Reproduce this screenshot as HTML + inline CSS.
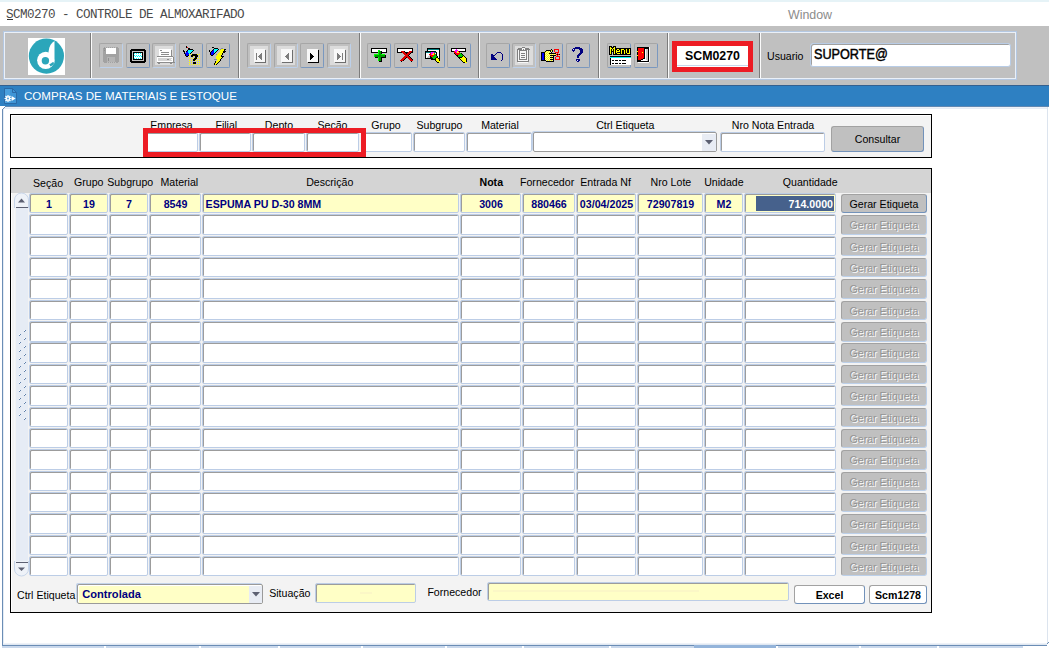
<!DOCTYPE html>
<html><head><meta charset="utf-8"><title>SCM0270</title>
<style>
html,body{margin:0;padding:0;}
body{width:1049px;height:648px;overflow:hidden;position:relative;background:#fff;font-family:"Liberation Sans",sans-serif;}
div,svg{position:absolute;}
.t{white-space:nowrap;line-height:1;}
</style></head><body>
<div style="left:0px;top:0px;width:1049px;height:2px;background:#e6f3f7"></div>
<div class="t" style="left:6px;top:8.94px;font-size:12.6px;color:#4a4a4a;text-align:left;font-family:'Liberation Mono', monospace;letter-spacing:-0.56px;">SCM0270 - CONTROLE DE ALMOXARIFADO</div>
<div style="left:7px;top:19px;width:6px;height:1px;background:#333"></div>
<div class="t" style="left:788px;top:8.50px;font-size:12.4px;color:#8c8c8c;text-align:left;font-family:'Liberation Sans', sans-serif;">Window</div>
<div style="left:0px;top:26px;width:1049px;height:59px;background:#c0c0c0"></div>
<div style="left:3px;top:31px;width:1014px;height:49px;border:1px solid #b4c8e2;box-sizing:border-box"></div>
<div style="left:4px;top:32px;width:1012px;height:47px;border:1px solid #eaf0f8;box-sizing:border-box"></div>
<div style="left:90px;top:33px;width:1px;height:45px;background:#7c7c7c"></div>
<div style="left:91px;top:33px;width:1px;height:45px;background:#fbfbfb"></div>
<div style="left:238px;top:33px;width:1px;height:45px;background:#7c7c7c"></div>
<div style="left:239px;top:33px;width:1px;height:45px;background:#fbfbfb"></div>
<div style="left:359px;top:33px;width:1px;height:45px;background:#7c7c7c"></div>
<div style="left:360px;top:33px;width:1px;height:45px;background:#fbfbfb"></div>
<div style="left:478px;top:33px;width:1px;height:45px;background:#7c7c7c"></div>
<div style="left:479px;top:33px;width:1px;height:45px;background:#fbfbfb"></div>
<div style="left:598px;top:33px;width:1px;height:45px;background:#7c7c7c"></div>
<div style="left:599px;top:33px;width:1px;height:45px;background:#fbfbfb"></div>
<div style="left:667px;top:33px;width:1px;height:45px;background:#7c7c7c"></div>
<div style="left:668px;top:33px;width:1px;height:45px;background:#fbfbfb"></div>
<div style="left:759px;top:33px;width:1px;height:45px;background:#7c7c7c"></div>
<div style="left:760px;top:33px;width:1px;height:45px;background:#fbfbfb"></div>
<svg style="position:absolute;left:28px;top:38px" width="37" height="37" viewBox="0 0 37 37">
<rect width="37" height="37" fill="#fff"/>
<circle cx="18.4" cy="18.1" r="17.6" fill="#2ba6ba"/>
<circle cx="17.7" cy="22.3" r="8.6" fill="#fff"/>
<path d="M20.6 13.5 C21 8.5 23.2 5.2 26.5 3.1 L26.5 25.2 L20.6 25.2 Z" fill="#fff"/>
<circle cx="17.4" cy="22.8" r="3.7" fill="#2ba6ba"/>
<path d="M21.2 26.2 Q23.2 25.6 24.4 24.2 L26.5 24.6 Q25.2 27.6 22.6 28.4 Z" fill="#2ba6ba"/>
</svg>
<div style="left:99px;top:43px;width:24px;height:25px;box-sizing:border-box;border:1px solid #a6a6a6;border-right-color:#bcd0ea;border-bottom-color:#bcd0ea;border-radius:2px;background:#c0c0c0"></div>
<svg style="position:absolute;left:103px;top:47px;" width="16" height="16" shape-rendering="crispEdges"><path fill="#a2a2a2" d="M1 0h1v1h-1zM3 0h1v1h-1zM5 0h1v1h-1zM7 0h1v1h-1zM9 0h1v1h-1zM11 0h1v1h-1zM13 0h2v1h-2zM0 1h1v1h-1zM2 1h1v1h-1zM13 1h3v1h-3zM0 2h3v1h-3zM13 2h3v1h-3zM0 3h1v1h-1zM2 3h1v1h-1zM13 3h3v1h-3zM0 4h3v1h-3zM13 4h3v1h-3zM0 5h3v1h-3zM13 5h3v1h-3zM0 6h3v1h-3zM13 6h3v1h-3zM0 7h16v1h-16zM0 8h16v1h-16zM0 9h16v1h-16zM0 10h4v1h-4zM12 10h4v1h-4zM0 11h4v1h-4zM12 11h4v1h-4zM0 12h4v1h-4zM12 12h4v1h-4zM0 13h4v1h-4zM12 13h4v1h-4zM0 14h4v1h-4zM12 14h4v1h-4zM1 15h3v1h-3zM5 15h1v1h-1zM7 15h1v1h-1zM9 15h1v1h-1zM11 15h1v1h-1zM13 15h2v1h-2z"/><path fill="#909090" d="M1 1h1v1h-1zM1 3h1v1h-1zM5 11h1v1h-1zM5 12h1v1h-1zM5 13h1v1h-1z"/><path fill="#ffffff" d="M3 1h10v1h-10zM3 2h10v1h-10zM3 3h10v1h-10zM3 4h10v1h-10zM3 5h10v1h-10zM3 6h10v1h-10z"/><path fill="#b4b4b4" d="M4 10h8v1h-8zM4 11h1v1h-1zM6 11h6v1h-6zM4 12h1v1h-1zM6 12h6v1h-6zM4 13h1v1h-1zM6 13h6v1h-6zM4 14h8v1h-8z"/></svg>
<div style="left:126px;top:43px;width:24px;height:25px;box-sizing:border-box;border:1px solid #a6a6a6;border-right-color:#7a98bf;border-bottom-color:#7a98bf;border-radius:2px;background:#c0c0c0"></div>
<svg style="position:absolute;left:130px;top:49px;" width="16" height="14" shape-rendering="crispEdges"><path fill="#000" d="M1 0h14v1h-14zM0 1h16v1h-16zM0 2h2v1h-2zM14 2h2v1h-2zM0 3h2v1h-2zM3 3h10v1h-10zM14 3h2v1h-2zM0 4h2v1h-2zM3 4h1v1h-1zM12 4h1v1h-1zM14 4h2v1h-2zM0 5h2v1h-2zM3 5h1v1h-1zM12 5h1v1h-1zM14 5h2v1h-2zM0 6h2v1h-2zM3 6h1v1h-1zM12 6h1v1h-1zM14 6h2v1h-2zM0 7h2v1h-2zM3 7h1v1h-1zM12 7h1v1h-1zM14 7h2v1h-2zM0 8h2v1h-2zM3 8h1v1h-1zM12 8h1v1h-1zM14 8h2v1h-2zM0 9h2v1h-2zM3 9h1v1h-1zM12 9h1v1h-1zM14 9h2v1h-2zM0 10h2v1h-2zM3 10h10v1h-10zM14 10h2v1h-2zM0 11h2v1h-2zM14 11h2v1h-2zM0 12h16v1h-16zM1 13h14v1h-14z"/><path fill="#c0c0c0" d="M2 2h12v1h-12zM2 3h1v1h-1zM13 3h1v1h-1zM2 4h1v1h-1zM13 4h1v1h-1zM2 5h1v1h-1zM13 5h1v1h-1zM2 6h1v1h-1zM13 6h1v1h-1zM2 7h1v1h-1zM13 7h1v1h-1zM2 8h1v1h-1zM13 8h1v1h-1zM2 9h1v1h-1zM13 9h1v1h-1zM2 10h1v1h-1zM13 10h1v1h-1zM2 11h12v1h-12z"/><path fill="#00ffff" d="M4 4h1v1h-1zM6 4h1v1h-1zM8 4h1v1h-1zM10 4h1v1h-1zM4 6h1v1h-1zM6 6h1v1h-1zM8 6h1v1h-1zM10 6h1v1h-1zM5 7h1v1h-1zM7 7h1v1h-1zM9 7h1v1h-1zM11 7h1v1h-1zM4 9h1v1h-1zM6 9h1v1h-1zM8 9h1v1h-1zM10 9h1v1h-1z"/><path fill="#ffffff" d="M5 4h1v1h-1zM7 4h1v1h-1zM9 4h1v1h-1zM11 4h1v1h-1zM4 5h8v1h-8zM5 6h1v1h-1zM7 6h1v1h-1zM9 6h1v1h-1zM11 6h1v1h-1zM4 7h1v1h-1zM6 7h1v1h-1zM8 7h1v1h-1zM10 7h1v1h-1zM4 8h8v1h-8zM5 9h1v1h-1zM7 9h1v1h-1zM9 9h1v1h-1zM11 9h1v1h-1z"/></svg>
<div style="left:152px;top:43px;width:24px;height:25px;box-sizing:border-box;border:1px solid #a6a6a6;border-right-color:#bcd0ea;border-bottom-color:#bcd0ea;border-radius:2px;background:#c0c0c0"></div>
<div style="left:155px;top:46px;width:18px;height:19px;background:#dcdcdc"></div>
<svg style="position:absolute;left:155px;top:46px;" width="20" height="19" shape-rendering="crispEdges"><path fill="#ffffff" d="M4 3h12v1h-12zM4 4h1v1h-1zM7 4h9v1h-9zM4 5h12v1h-12zM4 6h2v1h-2zM14 6h2v1h-2zM4 7h12v1h-12zM4 8h2v1h-2zM14 8h2v1h-2zM4 9h12v1h-12zM2 11h16v1h-16zM2 12h1v1h-1zM17 12h1v1h-1zM2 13h1v1h-1zM16 13h2v1h-2zM2 14h1v1h-1zM17 14h1v1h-1zM2 15h16v1h-16z"/><path fill="#8c8c8c" d="M5 4h2v1h-2zM16 4h1v1h-1zM16 5h1v1h-1zM6 6h8v1h-8zM16 6h1v1h-1zM16 7h1v1h-1zM6 8h8v1h-8zM16 8h1v1h-1zM16 9h1v1h-1zM2 10h16v1h-16zM18 11h1v1h-1zM18 12h1v1h-1zM12 13h2v1h-2zM18 13h1v1h-1zM18 14h1v1h-1zM18 15h1v1h-1zM2 16h18v1h-18zM3 17h2v1h-2zM15 17h2v1h-2z"/><path fill="#d4d4d4" d="M3 12h14v1h-14zM3 13h9v1h-9zM14 13h2v1h-2zM3 14h14v1h-14z"/></svg>
<div style="left:179px;top:43px;width:24px;height:25px;box-sizing:border-box;border:1px solid #a6a6a6;border-right-color:#7a98bf;border-bottom-color:#7a98bf;border-radius:2px;background:#c0c0c0"></div>
<svg style="position:absolute;left:180px;top:44px;" width="24" height="22" shape-rendering="crispEdges"><path fill="#000" d="M6 2h1v1h-1zM6 3h1v1h-1zM8 4h2v1h-2zM8 5h5v1h-5zM3 6h1v1h-1zM7 6h1v1h-1zM13 6h1v1h-1zM3 7h2v1h-2zM6 7h1v1h-1zM12 7h1v1h-1zM4 8h1v1h-1zM11 8h1v1h-1zM4 9h1v1h-1zM10 9h1v1h-1zM5 10h1v1h-1zM12 10h5v1h-5zM5 11h1v1h-1zM8 11h1v1h-1zM11 11h7v1h-7zM6 12h2v1h-2zM11 12h2v1h-2zM15 12h3v1h-3zM15 13h2v1h-2zM14 14h3v1h-3zM13 15h3v1h-3zM13 16h2v1h-2zM13 18h3v1h-3zM13 19h3v1h-3z"/><path fill="#ff0000" d="M7 3h1v1h-1z"/><path fill="#00ffff" d="M8 6h5v1h-5zM8 7h4v1h-4zM8 8h3v1h-3zM9 9h1v1h-1z"/><path fill="#0000ff" d="M7 7h1v1h-1zM6 8h2v1h-2zM5 9h4v1h-4zM6 10h3v1h-3zM6 11h2v1h-2z"/><path fill="#ffff00" d="M9 10h1v1h-1zM11 10h1v1h-1zM17 10h1v1h-1zM19 10h1v1h-1zM9 12h1v1h-1zM13 12h1v1h-1zM19 12h1v1h-1zM9 14h1v1h-1zM11 14h1v1h-1zM13 14h1v1h-1zM17 14h1v1h-1zM19 14h1v1h-1zM9 16h1v1h-1zM11 16h1v1h-1zM15 16h1v1h-1zM17 16h1v1h-1zM19 16h1v1h-1zM9 18h1v1h-1zM11 18h1v1h-1zM17 18h1v1h-1zM19 18h1v1h-1zM9 20h1v1h-1zM11 20h1v1h-1zM13 20h1v1h-1zM15 20h1v1h-1zM17 20h1v1h-1zM19 20h1v1h-1z"/></svg>
<div style="left:206px;top:43px;width:24px;height:25px;box-sizing:border-box;border:1px solid #a6a6a6;border-right-color:#7a98bf;border-bottom-color:#7a98bf;border-radius:2px;background:#c0c0c0"></div>
<svg style="position:absolute;left:207px;top:44px;" width="22" height="22" shape-rendering="crispEdges"><path fill="#000" d="M5 3h2v1h-2zM7 4h4v1h-4zM6 5h1v1h-1zM11 5h1v1h-1zM17 5h2v1h-2zM2 6h1v1h-1zM5 6h1v1h-1zM10 6h1v1h-1zM17 6h1v1h-1zM2 7h1v1h-1zM4 7h1v1h-1zM9 7h1v1h-1zM16 7h3v1h-3zM3 8h1v1h-1zM8 8h1v1h-1zM16 8h2v1h-2zM3 9h1v1h-1zM7 9h1v1h-1zM15 9h1v1h-1zM3 10h1v1h-1zM6 10h1v1h-1zM15 10h1v1h-1zM4 11h2v1h-2zM14 11h1v1h-1zM14 12h3v1h-3zM15 13h1v1h-1zM14 14h1v1h-1zM13 15h1v1h-1zM13 16h1v1h-1zM8 17h1v1h-1zM12 17h1v1h-1zM8 18h1v1h-1zM11 18h1v1h-1zM7 19h1v1h-1zM10 19h1v1h-1zM7 20h1v1h-1zM9 20h1v1h-1z"/><path fill="#8888a0" d="M14 4h2v1h-2zM13 5h1v1h-1zM9 10h1v1h-1zM7 15h3v1h-3z"/><path fill="#00ffff" d="M7 5h4v1h-4zM7 6h3v1h-3zM7 7h2v1h-2zM7 8h1v1h-1z"/><path fill="#ffff00" d="M14 5h3v1h-3zM13 6h4v1h-4zM13 7h3v1h-3zM12 8h4v1h-4zM11 9h4v1h-4zM10 10h5v1h-5zM10 11h4v1h-4zM9 12h5v1h-5zM9 13h6v1h-6zM9 14h5v1h-5zM10 15h3v1h-3zM10 16h3v1h-3zM9 17h3v1h-3zM9 18h2v1h-2zM8 19h2v1h-2zM8 20h1v1h-1z"/><path fill="#0000ff" d="M6 6h1v1h-1zM5 7h2v1h-2zM4 8h3v1h-3zM4 9h3v1h-3zM4 10h2v1h-2z"/></svg>
<div style="left:247px;top:43px;width:24px;height:25px;box-sizing:border-box;border:1px solid #a6a6a6;border-right-color:#bcd0ea;border-bottom-color:#bcd0ea;border-radius:2px;background:#c0c0c0"></div>
<div style="left:250px;top:46px;width:18px;height:19px;background:#dcdcdc"></div>
<svg style="position:absolute;left:254px;top:49px;" width="12" height="14" shape-rendering="crispEdges"><path fill="#f8f8f8" d="M0 0h11v1h-11zM0 1h11v1h-11zM0 2h11v1h-11zM0 3h11v1h-11zM0 4h2v1h-2zM3 4h4v1h-4zM8 4h3v1h-3zM0 5h2v1h-2zM3 5h3v1h-3zM8 5h3v1h-3zM0 6h2v1h-2zM3 6h2v1h-2zM8 6h3v1h-3zM0 7h2v1h-2zM3 7h1v1h-1zM8 7h3v1h-3zM0 8h2v1h-2zM3 8h2v1h-2zM8 8h3v1h-3zM0 9h2v1h-2zM3 9h3v1h-3zM8 9h3v1h-3zM0 10h2v1h-2zM3 10h4v1h-4zM8 10h3v1h-3zM0 11h11v1h-11zM0 12h11v1h-11z"/><path fill="#6e6e6e" d="M11 1h1v1h-1zM11 2h1v1h-1zM11 3h1v1h-1zM11 4h1v1h-1zM11 5h1v1h-1zM11 6h1v1h-1zM11 7h1v1h-1zM11 8h1v1h-1zM11 9h1v1h-1zM11 10h1v1h-1zM11 11h1v1h-1zM11 12h1v1h-1zM1 13h11v1h-11z"/><path fill="#7c7c7c" d="M2 4h1v1h-1zM7 4h1v1h-1zM2 5h1v1h-1zM6 5h2v1h-2zM2 6h1v1h-1zM5 6h3v1h-3zM2 7h1v1h-1zM4 7h4v1h-4zM2 8h1v1h-1zM5 8h3v1h-3zM2 9h1v1h-1zM6 9h2v1h-2zM2 10h1v1h-1zM7 10h1v1h-1z"/></svg>
<div style="left:274px;top:43px;width:24px;height:25px;box-sizing:border-box;border:1px solid #a6a6a6;border-right-color:#bcd0ea;border-bottom-color:#bcd0ea;border-radius:2px;background:#c0c0c0"></div>
<div style="left:277px;top:46px;width:18px;height:19px;background:#dcdcdc"></div>
<svg style="position:absolute;left:281px;top:49px;" width="12" height="14" shape-rendering="crispEdges"><path fill="#f8f8f8" d="M0 0h11v1h-11zM0 1h11v1h-11zM0 2h11v1h-11zM0 3h11v1h-11zM0 4h7v1h-7zM8 4h3v1h-3zM0 5h6v1h-6zM8 5h3v1h-3zM0 6h5v1h-5zM8 6h3v1h-3zM0 7h4v1h-4zM8 7h3v1h-3zM0 8h5v1h-5zM8 8h3v1h-3zM0 9h6v1h-6zM8 9h3v1h-3zM0 10h7v1h-7zM8 10h3v1h-3zM0 11h11v1h-11zM0 12h11v1h-11z"/><path fill="#6e6e6e" d="M11 1h1v1h-1zM11 2h1v1h-1zM11 3h1v1h-1zM11 4h1v1h-1zM11 5h1v1h-1zM11 6h1v1h-1zM11 7h1v1h-1zM11 8h1v1h-1zM11 9h1v1h-1zM11 10h1v1h-1zM11 11h1v1h-1zM11 12h1v1h-1zM1 13h11v1h-11z"/><path fill="#7c7c7c" d="M7 4h1v1h-1zM6 5h2v1h-2zM5 6h3v1h-3zM4 7h4v1h-4zM5 8h3v1h-3zM6 9h2v1h-2zM7 10h1v1h-1z"/></svg>
<div style="left:300px;top:43px;width:24px;height:25px;box-sizing:border-box;border:1px solid #a6a6a6;border-right-color:#7a98bf;border-bottom-color:#7a98bf;border-radius:2px;background:#c0c0c0"></div>
<svg style="position:absolute;left:307px;top:49px;" width="12" height="14" shape-rendering="crispEdges"><path fill="#f8f8f8" d="M0 0h11v1h-11zM0 1h11v1h-11zM0 2h11v1h-11zM0 3h11v1h-11zM0 4h3v1h-3zM4 4h7v1h-7zM0 5h3v1h-3zM5 5h6v1h-6zM0 6h3v1h-3zM6 6h5v1h-5zM0 7h3v1h-3zM7 7h4v1h-4zM0 8h3v1h-3zM6 8h5v1h-5zM0 9h3v1h-3zM5 9h6v1h-6zM0 10h3v1h-3zM4 10h7v1h-7zM0 11h11v1h-11zM0 12h11v1h-11z"/><path fill="#000" d="M11 1h1v1h-1zM11 2h1v1h-1zM11 3h1v1h-1zM3 4h1v1h-1zM11 4h1v1h-1zM3 5h2v1h-2zM11 5h1v1h-1zM3 6h3v1h-3zM11 6h1v1h-1zM3 7h4v1h-4zM11 7h1v1h-1zM3 8h3v1h-3zM11 8h1v1h-1zM3 9h2v1h-2zM11 9h1v1h-1zM3 10h1v1h-1zM11 10h1v1h-1zM11 11h1v1h-1zM11 12h1v1h-1zM1 13h11v1h-11z"/></svg>
<div style="left:327px;top:43px;width:24px;height:25px;box-sizing:border-box;border:1px solid #a6a6a6;border-right-color:#bcd0ea;border-bottom-color:#bcd0ea;border-radius:2px;background:#c0c0c0"></div>
<div style="left:330px;top:46px;width:18px;height:19px;background:#dcdcdc"></div>
<svg style="position:absolute;left:334px;top:49px;" width="12" height="14" shape-rendering="crispEdges"><path fill="#f8f8f8" d="M0 0h11v1h-11zM0 1h11v1h-11zM0 2h11v1h-11zM0 3h11v1h-11zM0 4h3v1h-3zM4 4h4v1h-4zM9 4h2v1h-2zM0 5h3v1h-3zM5 5h3v1h-3zM9 5h2v1h-2zM0 6h3v1h-3zM6 6h2v1h-2zM9 6h2v1h-2zM0 7h3v1h-3zM7 7h1v1h-1zM9 7h2v1h-2zM0 8h3v1h-3zM6 8h2v1h-2zM9 8h2v1h-2zM0 9h3v1h-3zM5 9h3v1h-3zM9 9h2v1h-2zM0 10h3v1h-3zM4 10h4v1h-4zM9 10h2v1h-2zM0 11h11v1h-11zM0 12h11v1h-11z"/><path fill="#6e6e6e" d="M11 1h1v1h-1zM11 2h1v1h-1zM11 3h1v1h-1zM11 4h1v1h-1zM11 5h1v1h-1zM11 6h1v1h-1zM11 7h1v1h-1zM11 8h1v1h-1zM11 9h1v1h-1zM11 10h1v1h-1zM11 11h1v1h-1zM11 12h1v1h-1zM1 13h11v1h-11z"/><path fill="#7c7c7c" d="M3 4h1v1h-1zM8 4h1v1h-1zM3 5h2v1h-2zM8 5h1v1h-1zM3 6h3v1h-3zM8 6h1v1h-1zM3 7h4v1h-4zM8 7h1v1h-1zM3 8h3v1h-3zM8 8h1v1h-1zM3 9h2v1h-2zM8 9h1v1h-1zM3 10h1v1h-1zM8 10h1v1h-1z"/></svg>
<div style="left:367px;top:43px;width:24px;height:25px;box-sizing:border-box;border:1px solid #a6a6a6;border-right-color:#7a98bf;border-bottom-color:#7a98bf;border-radius:2px;background:#c0c0c0"></div>
<svg style="position:absolute;left:371px;top:48px;" width="16" height="14" shape-rendering="crispEdges"><path fill="#000" d="M0 0h16v1h-16zM0 1h1v1h-1zM15 1h1v1h-1zM0 2h1v1h-1zM15 2h1v1h-1zM0 3h1v1h-1zM10 3h1v1h-1zM15 3h1v1h-1zM0 4h7v1h-7zM10 4h6v1h-6zM10 5h1v1h-1zM14 7h1v1h-1zM14 8h1v1h-1zM4 9h3v1h-3zM10 9h5v1h-5zM10 10h1v1h-1zM10 11h1v1h-1zM10 12h1v1h-1zM8 13h3v1h-3z"/><path fill="#fff" d="M1 1h14v1h-14zM1 2h6v1h-6zM9 2h6v1h-6zM1 3h6v1h-6zM11 3h4v1h-4z"/><path fill="#00ff00" d="M7 2h2v1h-2zM7 3h1v1h-1zM7 4h1v1h-1zM7 5h1v1h-1zM3 6h5v1h-5zM10 6h4v1h-4zM3 7h1v1h-1zM3 8h1v1h-1zM7 9h1v1h-1zM7 10h1v1h-1zM7 11h1v1h-1zM7 12h1v1h-1z"/><path fill="#009a00" d="M8 3h2v1h-2zM8 4h2v1h-2zM8 5h2v1h-2zM8 6h2v1h-2zM4 7h10v1h-10zM4 8h10v1h-10zM8 9h2v1h-2zM8 10h2v1h-2zM8 11h2v1h-2zM8 12h2v1h-2z"/></svg>
<div style="left:394px;top:43px;width:24px;height:25px;box-sizing:border-box;border:1px solid #a6a6a6;border-right-color:#7a98bf;border-bottom-color:#7a98bf;border-radius:2px;background:#c0c0c0"></div>
<svg style="position:absolute;left:397px;top:48px;" width="16" height="15" shape-rendering="crispEdges"><path fill="#000" d="M0 0h16v1h-16zM0 1h1v1h-1zM15 1h1v1h-1zM0 2h1v1h-1zM15 2h1v1h-1zM0 3h1v1h-1zM7 3h1v1h-1zM15 3h1v1h-1zM0 4h5v1h-5zM8 4h3v1h-3zM14 4h2v1h-2zM9 5h1v1h-1zM13 5h1v1h-1zM12 6h1v1h-1zM11 7h1v1h-1zM12 8h1v1h-1zM9 9h1v1h-1zM13 9h1v1h-1zM8 10h1v1h-1zM14 10h1v1h-1zM7 11h1v1h-1zM15 11h1v1h-1zM6 12h1v1h-1zM4 13h1v1h-1zM14 13h1v1h-1z"/><path fill="#fff" d="M1 1h14v1h-14zM1 2h14v1h-14zM1 3h3v1h-3zM8 3h4v1h-4z"/><path fill="#dd0000" d="M4 3h3v1h-3zM12 3h3v1h-3zM5 4h3v1h-3zM11 4h3v1h-3zM6 5h3v1h-3zM10 5h3v1h-3zM7 6h5v1h-5zM8 7h3v1h-3zM7 8h5v1h-5zM6 9h3v1h-3zM10 9h3v1h-3zM5 10h3v1h-3zM11 10h3v1h-3zM4 11h3v1h-3zM12 11h3v1h-3zM3 12h3v1h-3zM13 12h3v1h-3z"/></svg>
<div style="left:421px;top:43px;width:24px;height:25px;box-sizing:border-box;border:1px solid #a6a6a6;border-right-color:#7a98bf;border-bottom-color:#7a98bf;border-radius:2px;background:#c0c0c0"></div>
<svg style="position:absolute;left:425px;top:47px;" width="16" height="16" shape-rendering="crispEdges"><path fill="#000" d="M2 1h13v1h-13zM2 2h1v1h-1zM14 2h1v1h-1zM2 3h1v1h-1zM14 3h1v1h-1zM0 4h11v1h-11zM14 4h1v1h-1zM0 5h1v1h-1zM11 5h1v1h-1zM14 5h1v1h-1zM0 6h1v1h-1zM11 6h1v1h-1zM14 6h1v1h-1zM0 7h1v1h-1zM11 7h1v1h-1zM14 7h1v1h-1zM0 8h1v1h-1zM11 8h1v1h-1zM14 8h1v1h-1zM0 9h1v1h-1zM5 9h1v1h-1zM12 9h1v1h-1zM14 9h1v1h-1zM0 10h1v1h-1zM5 10h2v1h-2zM11 10h2v1h-2zM14 10h1v1h-1zM0 11h8v1h-8zM10 11h1v1h-1zM13 11h2v1h-2zM6 12h5v1h-5zM14 12h1v1h-1zM10 13h1v1h-1zM14 13h1v1h-1zM11 14h1v1h-1zM12 15h2v1h-2z"/><path fill="#008080" d="M3 2h11v1h-11zM1 5h5v1h-5zM9 5h2v1h-2z"/><path fill="#fff" d="M3 3h11v1h-11zM11 4h3v1h-3zM12 5h2v1h-2zM1 6h4v1h-4zM10 6h1v1h-1zM12 6h2v1h-2zM1 7h3v1h-3zM12 7h2v1h-2zM1 8h3v1h-3zM12 8h2v1h-2zM1 9h2v1h-2zM13 9h1v1h-1zM1 10h1v1h-1zM13 10h1v1h-1z"/><path fill="#ff00ff" d="M6 5h3v1h-3zM6 6h2v1h-2zM6 7h1v1h-1z"/><path fill="#ff0000" d="M5 6h1v1h-1zM9 6h1v1h-1zM4 7h2v1h-2zM9 7h1v1h-1zM5 8h4v1h-4zM6 9h2v1h-2z"/><path fill="#ffff00" d="M8 6h1v1h-1zM7 7h2v1h-2zM11 11h2v1h-2zM11 12h3v1h-3zM11 13h3v1h-3zM12 14h3v1h-3zM14 15h1v1h-1z"/><path fill="#00cc00" d="M10 7h1v1h-1zM9 8h2v1h-2zM8 9h4v1h-4zM7 10h4v1h-4zM8 11h2v1h-2z"/><path fill="#c8c8c8" d="M4 8h1v1h-1zM3 9h2v1h-2zM2 10h3v1h-3z"/></svg>
<div style="left:447px;top:43px;width:24px;height:25px;box-sizing:border-box;border:1px solid #a6a6a6;border-right-color:#7a98bf;border-bottom-color:#7a98bf;border-radius:2px;background:#c0c0c0"></div>
<svg style="position:absolute;left:451px;top:47px;" width="16" height="16" shape-rendering="crispEdges"><path fill="#000" d="M0 1h15v1h-15zM0 2h1v1h-1zM14 2h1v1h-1zM0 3h1v1h-1zM14 3h1v1h-1zM0 4h3v1h-3zM8 4h7v1h-7zM3 6h1v1h-1zM10 6h1v1h-1zM4 7h1v1h-1zM11 7h1v1h-1zM5 8h2v1h-2zM12 8h1v1h-1zM6 9h1v1h-1zM11 9h1v1h-1zM13 9h1v1h-1zM7 10h4v1h-4zM14 10h1v1h-1zM8 11h1v1h-1zM15 11h1v1h-1zM9 12h1v1h-1zM15 12h1v1h-1zM10 13h1v1h-1zM15 13h1v1h-1zM11 14h1v1h-1zM15 14h1v1h-1zM12 15h2v1h-2z"/><path fill="#fff" d="M1 2h4v1h-4zM6 2h8v1h-8zM1 3h3v1h-3zM7 3h7v1h-7z"/><path fill="#ff00ff" d="M5 2h1v1h-1zM4 3h3v1h-3zM4 4h2v1h-2zM5 5h1v1h-1z"/><path fill="#ff0000" d="M3 4h1v1h-1zM7 4h1v1h-1zM3 5h2v1h-2zM8 5h1v1h-1zM4 6h5v1h-5zM5 7h3v1h-3z"/><path fill="#ffff00" d="M6 4h1v1h-1zM6 5h2v1h-2zM12 9h1v1h-1zM11 10h3v1h-3zM9 11h6v1h-6zM10 12h5v1h-5zM11 13h4v1h-4zM12 14h3v1h-3zM14 15h2v1h-2z"/><path fill="#00cc00" d="M9 6h1v1h-1zM8 7h3v1h-3zM7 8h5v1h-5zM7 9h4v1h-4z"/></svg>
<div style="left:486px;top:43px;width:24px;height:25px;box-sizing:border-box;border:1px solid #a6a6a6;border-right-color:#7a98bf;border-bottom-color:#7a98bf;border-radius:2px;background:#c0c0c0"></div>
<svg style="position:absolute;left:491px;top:52px;" width="13" height="9" shape-rendering="crispEdges"><path fill="#000080" d="M6 0h4v1h-4zM5 1h1v1h-1zM10 1h1v1h-1zM0 2h2v1h-2zM4 2h1v1h-1zM11 2h1v1h-1zM0 3h4v1h-4zM11 3h1v1h-1zM0 4h3v1h-3zM11 4h1v1h-1zM0 5h4v1h-4zM11 5h1v1h-1zM0 6h5v1h-5zM11 6h1v1h-1zM0 7h6v1h-6zM11 7h1v1h-1zM10 8h1v1h-1z"/></svg>
<div style="left:512px;top:43px;width:24px;height:25px;box-sizing:border-box;border:1px solid #a6a6a6;border-right-color:#bcd0ea;border-bottom-color:#bcd0ea;border-radius:2px;background:#c0c0c0"></div>
<div style="left:515px;top:46px;width:18px;height:19px;background:#dcdcdc"></div>
<svg style="position:absolute;left:516px;top:47px;" width="14" height="16" shape-rendering="crispEdges"><path fill="#808080" d="M6 0h3v1h-3zM2 1h4v1h-4zM9 1h4v1h-4zM1 2h5v1h-5zM7 2h1v1h-1zM9 2h5v1h-5zM1 3h1v1h-1zM3 3h8v1h-8zM12 3h1v1h-1zM1 4h1v1h-1zM3 4h1v1h-1zM10 4h1v1h-1zM12 4h1v1h-1zM1 5h1v1h-1zM3 5h1v1h-1zM10 5h1v1h-1zM12 5h1v1h-1zM1 6h1v1h-1zM3 6h1v1h-1zM5 6h4v1h-4zM10 6h1v1h-1zM12 6h1v1h-1zM1 7h1v1h-1zM3 7h1v1h-1zM10 7h1v1h-1zM12 7h1v1h-1zM1 8h1v1h-1zM3 8h1v1h-1zM5 8h4v1h-4zM10 8h1v1h-1zM12 8h1v1h-1zM1 9h1v1h-1zM3 9h1v1h-1zM10 9h1v1h-1zM12 9h1v1h-1zM1 10h1v1h-1zM3 10h1v1h-1zM5 10h4v1h-4zM10 10h1v1h-1zM12 10h1v1h-1zM1 11h1v1h-1zM3 11h1v1h-1zM10 11h1v1h-1zM12 11h1v1h-1zM1 12h1v1h-1zM3 12h8v1h-8zM12 12h1v1h-1zM1 13h1v1h-1zM12 13h1v1h-1zM1 14h12v1h-12z"/><path fill="#f8f8f8" d="M6 1h3v1h-3zM6 2h1v1h-1zM8 2h1v1h-1zM2 3h1v1h-1zM11 3h1v1h-1zM2 4h1v1h-1zM4 4h6v1h-6zM11 4h1v1h-1zM2 5h1v1h-1zM4 5h6v1h-6zM11 5h1v1h-1zM2 6h1v1h-1zM4 6h1v1h-1zM9 6h1v1h-1zM11 6h1v1h-1zM2 7h1v1h-1zM4 7h6v1h-6zM11 7h1v1h-1zM2 8h1v1h-1zM4 8h1v1h-1zM9 8h1v1h-1zM11 8h1v1h-1zM2 9h1v1h-1zM4 9h6v1h-6zM11 9h1v1h-1zM2 10h1v1h-1zM4 10h1v1h-1zM9 10h1v1h-1zM11 10h1v1h-1zM2 11h1v1h-1zM4 11h6v1h-6zM11 11h1v1h-1zM2 12h1v1h-1zM11 12h1v1h-1zM2 13h10v1h-10zM2 15h10v1h-10z"/></svg>
<div style="left:539px;top:43px;width:24px;height:25px;box-sizing:border-box;border:1px solid #a6a6a6;border-right-color:#7a98bf;border-bottom-color:#7a98bf;border-radius:2px;background:#c0c0c0"></div>
<svg style="position:absolute;left:537px;top:43px;" width="24" height="19" shape-rendering="crispEdges"><path fill="#000" d="M14 6h1v1h-1zM9 7h5v1h-5zM15 7h1v1h-1zM8 8h1v1h-1zM13 8h1v1h-1zM15 8h1v1h-1zM4 9h4v1h-4zM14 9h1v1h-1zM4 10h1v1h-1zM7 10h1v1h-1zM12 10h7v1h-7zM4 11h1v1h-1zM7 11h1v1h-1zM20 11h1v1h-1zM22 11h1v1h-1zM4 12h1v1h-1zM7 12h1v1h-1zM13 12h6v1h-6zM4 13h1v1h-1zM7 13h1v1h-1zM16 13h1v1h-1zM4 14h1v1h-1zM7 14h1v1h-1zM13 14h4v1h-4zM4 15h1v1h-1zM7 15h1v1h-1zM16 15h1v1h-1zM4 16h1v1h-1zM7 16h1v1h-1zM13 16h4v1h-4zM4 17h5v1h-5zM16 17h1v1h-1zM9 18h8v1h-8z"/><path fill="#ff0000" d="M17 6h5v1h-5zM17 7h1v1h-1zM21 7h1v1h-1zM17 8h1v1h-1zM21 8h1v1h-1zM18 9h4v1h-4zM20 10h1v1h-1zM19 11h1v1h-1zM21 11h1v1h-1zM20 12h1v1h-1zM19 13h4v1h-4zM18 14h1v1h-1zM22 14h1v1h-1zM18 15h1v1h-1zM22 15h1v1h-1zM18 16h5v1h-5z"/><path fill="#ffff00" d="M14 7h1v1h-1zM9 8h1v1h-1zM11 8h1v1h-1zM8 9h1v1h-1zM10 9h1v1h-1zM12 9h1v1h-1zM9 10h1v1h-1zM11 10h1v1h-1zM8 11h1v1h-1zM10 11h1v1h-1zM12 11h1v1h-1zM14 11h1v1h-1zM16 11h1v1h-1zM18 11h1v1h-1zM9 12h1v1h-1zM11 12h1v1h-1zM8 13h1v1h-1zM10 13h1v1h-1zM12 13h1v1h-1zM14 13h1v1h-1zM9 14h1v1h-1zM11 14h1v1h-1zM8 15h1v1h-1zM10 15h1v1h-1zM12 15h1v1h-1zM14 15h1v1h-1zM9 16h1v1h-1zM11 16h1v1h-1zM10 17h1v1h-1zM12 17h1v1h-1zM14 17h1v1h-1z"/><path fill="#f0f0b0" d="M10 8h1v1h-1zM12 8h1v1h-1zM14 8h1v1h-1zM9 9h1v1h-1zM11 9h1v1h-1zM13 9h1v1h-1zM8 10h1v1h-1zM10 10h1v1h-1zM9 11h1v1h-1zM11 11h1v1h-1zM13 11h1v1h-1zM15 11h1v1h-1zM17 11h1v1h-1zM8 12h1v1h-1zM10 12h1v1h-1zM12 12h1v1h-1zM9 13h1v1h-1zM11 13h1v1h-1zM13 13h1v1h-1zM15 13h1v1h-1zM8 14h1v1h-1zM10 14h1v1h-1zM12 14h1v1h-1zM9 15h1v1h-1zM11 15h1v1h-1zM13 15h1v1h-1zM15 15h1v1h-1zM8 16h1v1h-1zM10 16h1v1h-1zM12 16h1v1h-1zM9 17h1v1h-1zM11 17h1v1h-1zM13 17h1v1h-1zM15 17h1v1h-1z"/><path fill="#0000ff" d="M5 10h2v1h-2zM5 11h2v1h-2zM5 12h2v1h-2zM5 13h2v1h-2zM5 14h2v1h-2zM5 15h2v1h-2zM5 16h2v1h-2z"/></svg>
<div style="left:566px;top:43px;width:24px;height:25px;box-sizing:border-box;border:1px solid #a6a6a6;border-right-color:#7a98bf;border-bottom-color:#7a98bf;border-radius:2px;background:#c0c0c0"></div>
<svg style="position:absolute;left:571px;top:47px;" width="12" height="15" shape-rendering="crispEdges"><path fill="#000080" d="M4 0h5v1h-5zM2 1h9v1h-9zM1 2h1v1h-1zM3 2h1v1h-1zM8 2h4v1h-4zM1 3h3v1h-3zM9 3h3v1h-3zM2 4h1v1h-1zM9 4h3v1h-3zM9 5h3v1h-3zM8 6h3v1h-3zM7 7h3v1h-3zM6 8h3v1h-3zM6 9h2v1h-2zM6 10h2v1h-2zM5 12h4v1h-4zM5 13h1v1h-1zM7 13h2v1h-2zM6 14h2v1h-2z"/><path fill="#e0e0ff" d="M2 2h1v1h-1zM6 13h1v1h-1z"/></svg>
<div style="left:607px;top:43px;width:24px;height:25px;box-sizing:border-box;border:1px solid #a6a6a6;border-right-color:#7a98bf;border-bottom-color:#7a98bf;border-radius:2px;background:#c0c0c0"></div>
<svg style="position:absolute;left:609px;top:46px;" width="22" height="19" shape-rendering="crispEdges"><path fill="#000" d="M0 0h3v1h-3zM4 0h3v1h-3zM0 1h1v1h-1zM2 1h3v1h-3zM6 1h1v1h-1zM0 2h1v1h-1zM3 2h1v1h-1zM6 2h16v1h-16zM0 3h1v1h-1zM2 3h1v1h-1zM4 3h1v1h-1zM6 3h2v1h-2zM10 3h2v1h-2zM15 3h2v1h-2zM18 3h2v1h-2zM21 3h1v1h-1zM0 4h1v1h-1zM2 4h1v1h-1zM4 4h1v1h-1zM6 4h1v1h-1zM8 4h2v1h-2zM11 4h1v1h-1zM13 4h2v1h-2zM16 4h1v1h-1zM18 4h2v1h-2zM21 4h1v1h-1zM0 5h1v1h-1zM2 5h3v1h-3zM6 5h1v1h-1zM11 5h1v1h-1zM13 5h2v1h-2zM16 5h1v1h-1zM18 5h2v1h-2zM21 5h1v1h-1zM0 6h1v1h-1zM2 6h1v1h-1zM4 6h1v1h-1zM6 6h1v1h-1zM8 6h4v1h-4zM13 6h2v1h-2zM16 6h1v1h-1zM18 6h2v1h-2zM21 6h1v1h-1zM0 7h1v1h-1zM2 7h1v1h-1zM4 7h1v1h-1zM6 7h2v1h-2zM11 7h1v1h-1zM13 7h2v1h-2zM16 7h2v1h-2zM21 7h1v1h-1zM0 8h3v1h-3zM4 8h18v1h-18zM1 10h21v1h-21zM1 12h1v1h-1zM1 13h1v1h-1zM1 14h1v1h-1zM3 14h2v1h-2zM6 14h3v1h-3zM10 14h2v1h-2zM13 14h4v1h-4zM1 15h1v1h-1zM1 16h1v1h-1zM1 17h1v1h-1zM3 17h2v1h-2zM6 17h3v1h-3zM10 17h2v1h-2zM13 17h4v1h-4zM1 18h1v1h-1z"/><path fill="#ffff00" d="M1 1h1v1h-1zM5 1h1v1h-1zM1 2h2v1h-2zM4 2h2v1h-2zM1 3h1v1h-1zM3 3h1v1h-1zM5 3h1v1h-1zM8 3h2v1h-2zM12 3h3v1h-3zM17 3h1v1h-1zM20 3h1v1h-1zM1 4h1v1h-1zM3 4h1v1h-1zM5 4h1v1h-1zM7 4h1v1h-1zM10 4h1v1h-1zM12 4h1v1h-1zM15 4h1v1h-1zM17 4h1v1h-1zM20 4h1v1h-1zM1 5h1v1h-1zM5 5h1v1h-1zM7 5h4v1h-4zM12 5h1v1h-1zM15 5h1v1h-1zM17 5h1v1h-1zM20 5h1v1h-1zM1 6h1v1h-1zM5 6h1v1h-1zM7 6h1v1h-1zM12 6h1v1h-1zM15 6h1v1h-1zM17 6h1v1h-1zM20 6h1v1h-1zM1 7h1v1h-1zM5 7h1v1h-1zM8 7h3v1h-3zM12 7h1v1h-1zM15 7h1v1h-1zM18 7h3v1h-3z"/><path fill="#00ffff" d="M1 11h21v1h-21z"/><path fill="#fff" d="M2 12h20v1h-20zM2 13h20v1h-20zM2 14h1v1h-1zM5 14h1v1h-1zM9 14h1v1h-1zM12 14h1v1h-1zM17 14h5v1h-5zM2 15h20v1h-20zM2 16h20v1h-20zM2 17h1v1h-1zM5 17h1v1h-1zM9 17h1v1h-1zM12 17h1v1h-1zM17 17h5v1h-5zM2 18h20v1h-20z"/></svg>
<div style="left:634px;top:43px;width:24px;height:25px;box-sizing:border-box;border:1px solid #a6a6a6;border-right-color:#7a98bf;border-bottom-color:#7a98bf;border-radius:2px;background:#c0c0c0"></div>
<svg style="position:absolute;left:634px;top:43px;" width="16" height="20" shape-rendering="crispEdges"><path fill="#000" d="M3 4h12v1h-12zM3 5h1v1h-1zM10 5h5v1h-5zM3 6h1v1h-1zM10 6h1v1h-1zM14 6h1v1h-1zM3 7h1v1h-1zM10 7h1v1h-1zM14 7h1v1h-1zM10 8h1v1h-1zM14 8h1v1h-1zM3 9h1v1h-1zM10 9h1v1h-1zM14 9h1v1h-1zM3 10h1v1h-1zM10 10h1v1h-1zM14 10h1v1h-1zM3 11h1v1h-1zM10 11h1v1h-1zM14 11h1v1h-1zM10 12h1v1h-1zM14 12h1v1h-1zM3 13h1v1h-1zM10 13h1v1h-1zM14 13h1v1h-1zM3 14h1v1h-1zM10 14h1v1h-1zM14 14h1v1h-1zM3 15h1v1h-1zM9 15h2v1h-2zM14 15h1v1h-1zM3 16h1v1h-1zM7 16h2v1h-2zM14 16h1v1h-1zM3 17h4v1h-4zM14 17h1v1h-1zM3 18h12v1h-12z"/><path fill="#fff" d="M15 4h1v1h-1zM15 5h1v1h-1zM11 6h1v1h-1zM15 6h1v1h-1zM11 7h1v1h-1zM15 7h1v1h-1zM11 8h1v1h-1zM15 8h1v1h-1zM11 9h1v1h-1zM15 9h1v1h-1zM11 10h1v1h-1zM15 10h1v1h-1zM11 11h1v1h-1zM15 11h1v1h-1zM11 12h1v1h-1zM15 12h1v1h-1zM11 13h1v1h-1zM15 13h1v1h-1zM11 14h1v1h-1zM15 14h1v1h-1zM11 15h1v1h-1zM15 15h1v1h-1zM9 16h3v1h-3zM15 16h1v1h-1zM7 17h6v1h-6zM15 17h1v1h-1zM15 18h1v1h-1zM4 19h11v1h-11z"/><path fill="#ff0000" d="M4 5h6v1h-6zM4 6h6v1h-6zM4 7h6v1h-6zM4 8h6v1h-6zM4 9h4v1h-4zM9 9h1v1h-1zM4 10h6v1h-6zM4 11h6v1h-6zM4 12h6v1h-6zM4 13h6v1h-6zM4 14h6v1h-6zM4 15h5v1h-5zM4 16h3v1h-3z"/><path fill="#c8c8c8" d="M12 6h2v1h-2zM12 7h2v1h-2zM12 8h2v1h-2zM12 9h2v1h-2zM12 10h2v1h-2zM12 11h2v1h-2zM12 12h2v1h-2zM12 13h2v1h-2zM12 14h2v1h-2zM12 15h2v1h-2zM12 16h2v1h-2zM13 17h1v1h-1z"/><path fill="#ffff00" d="M3 8h1v1h-1zM8 9h1v1h-1zM3 12h1v1h-1z"/></svg>
<div style="left:672px;top:41px;width:81px;height:31px;background:#ed1c24"></div>
<div style="left:677px;top:46px;width:71px;height:21px;background:#fff"></div>
<div style="left:677px;top:65px;width:71px;height:1px;background:#c8d8ec"></div>
<div class="t" style="left:684.5px;top:49.04px;font-size:13.3px;font-weight:bold;color:#000;text-align:left;font-family:'Liberation Sans', sans-serif;transform:scaleX(0.93);transform-origin:0 0;">SCM0270</div>
<div class="t" style="left:767px;top:51.03px;font-size:10.6px;color:#000;text-align:left;font-family:'Liberation Sans', sans-serif;">Usuario</div>
<div style="left:810px;top:43px;width:201px;height:24px;box-sizing:border-box;border:1px solid #b8cce6;border-radius:3px;background:#fff;box-shadow:inset 1px 1px 0 #a0a0a0"></div>
<div class="t" style="left:814px;top:48.12px;font-size:13.8px;color:#000;text-align:left;font-family:'Liberation Sans', sans-serif;transform:scaleX(0.917);transform-origin:0 0;-webkit-text-stroke:0.45px #000;">SUPORTE@</div>
<div style="left:0px;top:85px;width:1049px;height:1px;background:#34608f"></div>
<div style="left:0px;top:86px;width:1049px;height:20px;background:#2e80c2"></div>
<svg style="position:absolute;left:3px;top:88px" width="15" height="17">
<path d="M1.5 0.5 H9.5 L13.5 4.5 V15.5 H1.5 Z" fill="#3f95d6" stroke="#2a69a6" stroke-width="1"/>
<path d="M9.5 0.5 V4.5 H13.5" fill="none" stroke="#2a69a6" stroke-width="1"/>
<rect x="2" y="1" width="5" height="14" fill="#4aa0de"/>
<g fill="#fff"><circle cx="5" cy="10.5" r="2.3"/><rect x="4.4" y="7" width="1.2" height="7"/><rect x="1.5" y="9.9" width="7" height="1.2"/>
<rect x="4.4" y="7" width="1.2" height="7" transform="rotate(45 5 10.5)"/><rect x="4.4" y="7" width="1.2" height="7" transform="rotate(-45 5 10.5)"/></g>
<circle cx="5" cy="10.5" r="0.9" fill="#3f95d6"/>
<path d="M8.6 8 L12.6 10.5 L8.6 13 Z" fill="#fff"/>
</svg>
<div class="t" style="left:24px;top:91.21px;font-size:11.57px;color:#fff;text-align:left;font-family:'Liberation Sans', sans-serif;">COMPRAS DE MATERIAIS E ESTOQUE</div>
<div style="left:0px;top:106px;width:1049px;height:542px;background:#fff"></div>
<div style="left:5px;top:106px;width:1044px;height:1px;background:#6088b2"></div>
<div style="left:2px;top:109px;width:1px;height:537px;background:#6b8db5"></div>
<div style="left:3px;top:108px;width:1px;height:1px;background:#6b8db5"></div>
<div style="left:4px;top:107px;width:1px;height:1px;background:#6b8db5"></div>
<div style="left:3px;top:109px;width:1px;height:534px;background:#e4ecf5"></div>
<div style="left:5px;top:107px;width:1042px;height:1px;background:#eef2f8"></div>
<div style="left:4px;top:108px;width:1043px;height:1px;background:#e6ecf5"></div>
<div style="left:1047px;top:107px;width:1px;height:537px;background:#dce4ee"></div>
<div style="left:3px;top:643px;width:1044px;height:1px;background:#eef2f8"></div>
<div style="left:3px;top:644px;width:1044px;height:1px;background:#dfe7f1"></div>
<div style="left:2px;top:645px;width:1045px;height:1px;background:#6b8db5"></div>
<div style="left:1047px;top:643px;width:1px;height:1px;background:#6b8db5"></div>
<div style="left:1048px;top:642px;width:1px;height:1px;background:#6b8db5"></div>
<div style="left:2px;top:646px;width:1021px;height:2px;background:#c9d8ec"></div>
<div style="left:104px;top:646px;width:2px;height:2px;background:#fff"></div>
<div style="left:199px;top:646px;width:2px;height:2px;background:#fff"></div>
<div style="left:278px;top:646px;width:2px;height:2px;background:#fff"></div>
<div style="left:361px;top:646px;width:2px;height:2px;background:#fff"></div>
<div style="left:445px;top:646px;width:2px;height:2px;background:#fff"></div>
<div style="left:522px;top:646px;width:2px;height:2px;background:#fff"></div>
<div style="left:609px;top:646px;width:2px;height:2px;background:#fff"></div>
<div style="left:776px;top:646px;width:2px;height:2px;background:#fff"></div>
<div style="left:859px;top:646px;width:2px;height:2px;background:#fff"></div>
<div style="left:937px;top:646px;width:2px;height:2px;background:#fff"></div>
<div style="left:694px;top:645px;width:82px;height:3px;background:#94b4da"></div>
<div style="left:10px;top:114px;width:922px;height:44px;box-sizing:border-box;border:1px solid #000;background:#f3f3f3"></div>
<div style="left:11px;top:115px;width:920px;height:1px;background:#fff"></div>
<div style="left:11px;top:115px;width:1px;height:42px;background:#fff"></div>
<div style="left:145px;top:132px;width:53px;height:20px;box-sizing:border-box;border:1px solid #bccde6;border-radius:2px;background:#fff;box-shadow:inset 1px 1px 0 #9c9c9c"></div>
<div style="left:199px;top:132px;width:52px;height:20px;box-sizing:border-box;border:1px solid #bccde6;border-radius:2px;background:#fff;box-shadow:inset 1px 1px 0 #9c9c9c"></div>
<div style="left:252px;top:132px;width:53px;height:20px;box-sizing:border-box;border:1px solid #bccde6;border-radius:2px;background:#fff;box-shadow:inset 1px 1px 0 #9c9c9c"></div>
<div style="left:306px;top:132px;width:53px;height:20px;box-sizing:border-box;border:1px solid #bccde6;border-radius:2px;background:#fff;box-shadow:inset 1px 1px 0 #9c9c9c"></div>
<div style="left:361px;top:132px;width:51px;height:20px;box-sizing:border-box;border:1px solid #bccde6;border-radius:2px;background:#fff;box-shadow:inset 1px 1px 0 #9c9c9c"></div>
<div style="left:413px;top:132px;width:52px;height:20px;box-sizing:border-box;border:1px solid #bccde6;border-radius:2px;background:#fff;box-shadow:inset 1px 1px 0 #9c9c9c"></div>
<div style="left:466px;top:132px;width:66px;height:20px;box-sizing:border-box;border:1px solid #bccde6;border-radius:2px;background:#fff;box-shadow:inset 1px 1px 0 #9c9c9c"></div>
<div style="left:533px;top:132px;width:184px;height:20px;box-sizing:border-box;border:1px solid #9a9a9a;border-radius:2px;background:#fff;box-shadow:inset 1px 1px 0 #fff,-1px -1px 0 #c4d4ea"></div>
<div style="left:702px;top:134px;width:14px;height:17px;background:#e8ecf4"></div>
<svg style="position:absolute;left:705.0px;top:139.5px" width="8" height="5"><path d="M0 0H8L4 4.5Z" fill="#5c6072"/></svg>
<div style="left:720px;top:132px;width:105px;height:20px;box-sizing:border-box;border:1px solid #bccde6;border-radius:2px;background:#fff;box-shadow:inset 1px 1px 0 #9c9c9c"></div>
<div class="t" style="left:111.5px;top:120.23px;width:120px;font-size:10.6px;color:#000;text-align:center;font-family:'Liberation Sans', sans-serif;">Empresa</div>
<div class="t" style="left:166.3px;top:120.23px;width:120px;font-size:10.6px;color:#000;text-align:center;font-family:'Liberation Sans', sans-serif;">Filial</div>
<div class="t" style="left:219px;top:120.23px;width:120px;font-size:10.6px;color:#000;text-align:center;font-family:'Liberation Sans', sans-serif;">Depto</div>
<div class="t" style="left:272.5px;top:120.23px;width:120px;font-size:10.6px;color:#000;text-align:center;font-family:'Liberation Sans', sans-serif;">Seção</div>
<div class="t" style="left:326px;top:120.23px;width:120px;font-size:10.6px;color:#000;text-align:center;font-family:'Liberation Sans', sans-serif;">Grupo</div>
<div class="t" style="left:379.5px;top:120.23px;width:120px;font-size:10.6px;color:#000;text-align:center;font-family:'Liberation Sans', sans-serif;">Subgrupo</div>
<div class="t" style="left:440px;top:120.23px;width:120px;font-size:10.6px;color:#000;text-align:center;font-family:'Liberation Sans', sans-serif;">Material</div>
<div class="t" style="left:565.3px;top:120.23px;width:120px;font-size:10.6px;color:#000;text-align:center;font-family:'Liberation Sans', sans-serif;">Ctrl Etiqueta</div>
<div class="t" style="left:713px;top:120.23px;width:120px;font-size:10.6px;color:#000;text-align:center;font-family:'Liberation Sans', sans-serif;">Nro Nota Entrada</div>
<div style="left:143px;top:128px;width:223px;height:29px;box-sizing:border-box;border:5px solid #ed1c24"></div>
<div style="left:831px;top:126px;width:93px;height:26px;box-sizing:border-box;border:1px solid #a2a2a2;border-right-color:#7292ba;border-bottom-color:#7292ba;border-radius:3px;background:#c0c0c0"></div>
<div class="t" style="left:831px;top:134.23px;width:93px;font-size:10.6px;color:#000;text-align:center;font-family:'Liberation Sans', sans-serif;">Consultar</div>
<div style="left:10px;top:168px;width:922px;height:445px;box-sizing:border-box;border:1px solid #000;background:#f3f3f3"></div>
<div style="left:11px;top:169px;width:920px;height:1px;background:#fff"></div>
<div style="left:11px;top:169px;width:1px;height:443px;background:#fff"></div>
<div style="left:11px;top:169px;width:920px;height:24px;background:#d4d4d4"></div>
<div class="t" style="left:33px;top:177.63px;font-size:10.6px;color:#000;text-align:left;font-family:'Liberation Sans', sans-serif;">Seção</div>
<div class="t" style="left:74px;top:176.73px;font-size:10.6px;color:#000;text-align:left;font-family:'Liberation Sans', sans-serif;">Grupo</div>
<div class="t" style="left:107.3px;top:176.73px;font-size:10.6px;color:#000;text-align:left;font-family:'Liberation Sans', sans-serif;">Subgrupo</div>
<div class="t" style="left:160.5px;top:176.73px;font-size:10.6px;color:#000;text-align:left;font-family:'Liberation Sans', sans-serif;">Material</div>
<div class="t" style="left:306.2px;top:176.83px;font-size:10.6px;color:#000;text-align:left;font-family:'Liberation Sans', sans-serif;">Descrição</div>
<div class="t" style="left:479.5px;top:176.83px;font-size:10.6px;font-weight:bold;color:#000;text-align:left;font-family:'Liberation Sans', sans-serif;">Nota</div>
<div class="t" style="left:520px;top:176.83px;font-size:10.6px;color:#000;text-align:left;font-family:'Liberation Sans', sans-serif;">Fornecedor</div>
<div class="t" style="left:580.3px;top:176.83px;font-size:10.6px;color:#000;text-align:left;font-family:'Liberation Sans', sans-serif;">Entrada Nf</div>
<div class="t" style="left:650.6px;top:176.83px;font-size:10.6px;color:#000;text-align:left;font-family:'Liberation Sans', sans-serif;">Nro Lote</div>
<div class="t" style="left:704.2px;top:176.83px;font-size:10.6px;color:#000;text-align:left;font-family:'Liberation Sans', sans-serif;">Unidade</div>
<div class="t" style="left:782.8px;top:176.83px;font-size:10.6px;color:#000;text-align:left;font-family:'Liberation Sans', sans-serif;">Quantidade</div>
<div style="left:16px;top:208px;width:12px;height:354px;background:#e6ecf5"></div>
<div style="left:14px;top:208px;width:1px;height:354px;background:#f4f7fb"></div>
<svg style="position:absolute;left:13px;top:192px" width="17" height="17">
<path d="M1.5 16 V8 A7 7 0 0 1 15.5 8 V16" fill="#eef2f8" stroke="#c8d6ea" stroke-width="1"/>
<path d="M5 10.5 H12 L8.5 6.5 Z" fill="#5c6072"/>
<rect x="3" y="15" width="12" height="1" fill="#5c6072"/>
</svg>
<svg style="position:absolute;left:13px;top:561px" width="17" height="17">
<path d="M1.5 0 V8 A7 7 0 0 0 15.5 8 V0" fill="#eef2f8" stroke="#c8d6ea" stroke-width="1"/>
<path d="M5 6.5 H12 L8.5 10 Z" fill="#5c6072"/>
<rect x="3" y="1" width="12" height="1" fill="#5c6072"/>
</svg>
<svg style="position:absolute;left:0;top:0" width="40" height="440" shape-rendering="crispEdges"><rect x="24" y="330" width="1" height="1" fill="#fff"/><rect x="25" y="330" width="1" height="1" fill="#5f80aa"/><rect x="24" y="331" width="1" height="1" fill="#5f80aa"/><rect x="19" y="334" width="1" height="1" fill="#fff"/><rect x="20" y="334" width="1" height="1" fill="#5f80aa"/><rect x="19" y="335" width="1" height="1" fill="#5f80aa"/><rect x="24" y="338" width="1" height="1" fill="#fff"/><rect x="25" y="338" width="1" height="1" fill="#5f80aa"/><rect x="24" y="339" width="1" height="1" fill="#5f80aa"/><rect x="19" y="342" width="1" height="1" fill="#fff"/><rect x="20" y="342" width="1" height="1" fill="#5f80aa"/><rect x="19" y="343" width="1" height="1" fill="#5f80aa"/><rect x="24" y="346" width="1" height="1" fill="#fff"/><rect x="25" y="346" width="1" height="1" fill="#5f80aa"/><rect x="24" y="347" width="1" height="1" fill="#5f80aa"/><rect x="19" y="350" width="1" height="1" fill="#fff"/><rect x="20" y="350" width="1" height="1" fill="#5f80aa"/><rect x="19" y="351" width="1" height="1" fill="#5f80aa"/><rect x="24" y="354" width="1" height="1" fill="#fff"/><rect x="25" y="354" width="1" height="1" fill="#5f80aa"/><rect x="24" y="355" width="1" height="1" fill="#5f80aa"/><rect x="19" y="358" width="1" height="1" fill="#fff"/><rect x="20" y="358" width="1" height="1" fill="#5f80aa"/><rect x="19" y="359" width="1" height="1" fill="#5f80aa"/><rect x="24" y="362" width="1" height="1" fill="#fff"/><rect x="25" y="362" width="1" height="1" fill="#5f80aa"/><rect x="24" y="363" width="1" height="1" fill="#5f80aa"/><rect x="19" y="366" width="1" height="1" fill="#fff"/><rect x="20" y="366" width="1" height="1" fill="#5f80aa"/><rect x="19" y="367" width="1" height="1" fill="#5f80aa"/><rect x="24" y="370" width="1" height="1" fill="#fff"/><rect x="25" y="370" width="1" height="1" fill="#5f80aa"/><rect x="24" y="371" width="1" height="1" fill="#5f80aa"/><rect x="19" y="374" width="1" height="1" fill="#fff"/><rect x="20" y="374" width="1" height="1" fill="#5f80aa"/><rect x="19" y="375" width="1" height="1" fill="#5f80aa"/><rect x="24" y="378" width="1" height="1" fill="#fff"/><rect x="25" y="378" width="1" height="1" fill="#5f80aa"/><rect x="24" y="379" width="1" height="1" fill="#5f80aa"/><rect x="19" y="382" width="1" height="1" fill="#fff"/><rect x="20" y="382" width="1" height="1" fill="#5f80aa"/><rect x="19" y="383" width="1" height="1" fill="#5f80aa"/><rect x="24" y="386" width="1" height="1" fill="#fff"/><rect x="25" y="386" width="1" height="1" fill="#5f80aa"/><rect x="24" y="387" width="1" height="1" fill="#5f80aa"/><rect x="19" y="390" width="1" height="1" fill="#fff"/><rect x="20" y="390" width="1" height="1" fill="#5f80aa"/><rect x="19" y="391" width="1" height="1" fill="#5f80aa"/><rect x="24" y="394" width="1" height="1" fill="#fff"/><rect x="25" y="394" width="1" height="1" fill="#5f80aa"/><rect x="24" y="395" width="1" height="1" fill="#5f80aa"/><rect x="19" y="398" width="1" height="1" fill="#fff"/><rect x="20" y="398" width="1" height="1" fill="#5f80aa"/><rect x="19" y="399" width="1" height="1" fill="#5f80aa"/><rect x="24" y="402" width="1" height="1" fill="#fff"/><rect x="25" y="402" width="1" height="1" fill="#5f80aa"/><rect x="24" y="403" width="1" height="1" fill="#5f80aa"/><rect x="19" y="406" width="1" height="1" fill="#fff"/><rect x="20" y="406" width="1" height="1" fill="#5f80aa"/><rect x="19" y="407" width="1" height="1" fill="#5f80aa"/><rect x="24" y="410" width="1" height="1" fill="#fff"/><rect x="25" y="410" width="1" height="1" fill="#5f80aa"/><rect x="24" y="411" width="1" height="1" fill="#5f80aa"/><rect x="19" y="414" width="1" height="1" fill="#fff"/><rect x="20" y="414" width="1" height="1" fill="#5f80aa"/><rect x="19" y="415" width="1" height="1" fill="#5f80aa"/><rect x="24" y="418" width="1" height="1" fill="#fff"/><rect x="25" y="418" width="1" height="1" fill="#5f80aa"/><rect x="24" y="419" width="1" height="1" fill="#5f80aa"/></svg>
<div style="left:29px;top:193px;width:39px;height:20px;box-sizing:border-box;border:1px solid #bccde6;border-radius:2px;background:#ffffc6;box-shadow:inset 1px 1px 0 #9c9c9c"></div>
<div style="left:69px;top:193px;width:39px;height:20px;box-sizing:border-box;border:1px solid #bccde6;border-radius:2px;background:#ffffc6;box-shadow:inset 1px 1px 0 #9c9c9c"></div>
<div style="left:109px;top:193px;width:39px;height:20px;box-sizing:border-box;border:1px solid #bccde6;border-radius:2px;background:#ffffc6;box-shadow:inset 1px 1px 0 #9c9c9c"></div>
<div style="left:149px;top:193px;width:52px;height:20px;box-sizing:border-box;border:1px solid #bccde6;border-radius:2px;background:#ffffc6;box-shadow:inset 1px 1px 0 #9c9c9c"></div>
<div style="left:202px;top:193px;width:257px;height:20px;box-sizing:border-box;border:1px solid #bccde6;border-radius:2px;background:#ffffc6;box-shadow:inset 1px 1px 0 #9c9c9c"></div>
<div style="left:460px;top:193px;width:61px;height:20px;box-sizing:border-box;border:1px solid #bccde6;border-radius:2px;background:#ffffc6;box-shadow:inset 1px 1px 0 #9c9c9c"></div>
<div style="left:522px;top:193px;width:53px;height:20px;box-sizing:border-box;border:1px solid #bccde6;border-radius:2px;background:#ffffc6;box-shadow:inset 1px 1px 0 #9c9c9c"></div>
<div style="left:576px;top:193px;width:60px;height:20px;box-sizing:border-box;border:1px solid #bccde6;border-radius:2px;background:#ffffc6;box-shadow:inset 1px 1px 0 #9c9c9c"></div>
<div style="left:637px;top:193px;width:66px;height:20px;box-sizing:border-box;border:1px solid #bccde6;border-radius:2px;background:#ffffc6;box-shadow:inset 1px 1px 0 #9c9c9c"></div>
<div style="left:704px;top:193px;width:39px;height:20px;box-sizing:border-box;border:1px solid #bccde6;border-radius:2px;background:#ffffc6;box-shadow:inset 1px 1px 0 #9c9c9c"></div>
<div style="left:744px;top:193px;width:92px;height:20px;box-sizing:border-box;border:1px solid #bccde6;border-radius:2px;background:#ffffc6;box-shadow:inset 1px 1px 0 #9c9c9c"></div>
<div style="left:841px;top:194px;width:86px;height:19px;box-sizing:border-box;border:1px solid #a2a2a2;border-right-color:#7292ba;border-bottom-color:#7292ba;border-radius:3px;background:#c0c0c0"></div>
<div class="t" style="left:841px;top:199.03px;width:86px;font-size:10.6px;color:#000;text-align:center;font-family:'Liberation Sans', sans-serif;">Gerar Etiqueta</div>
<div style="left:29px;top:214px;width:39px;height:21px;box-sizing:border-box;border:1px solid #bccde6;border-radius:2px;background:#fff;box-shadow:inset 1px 1px 0 #9c9c9c"></div>
<div style="left:69px;top:214px;width:39px;height:21px;box-sizing:border-box;border:1px solid #bccde6;border-radius:2px;background:#fff;box-shadow:inset 1px 1px 0 #9c9c9c"></div>
<div style="left:109px;top:214px;width:39px;height:21px;box-sizing:border-box;border:1px solid #bccde6;border-radius:2px;background:#fff;box-shadow:inset 1px 1px 0 #9c9c9c"></div>
<div style="left:149px;top:214px;width:52px;height:21px;box-sizing:border-box;border:1px solid #bccde6;border-radius:2px;background:#fff;box-shadow:inset 1px 1px 0 #9c9c9c"></div>
<div style="left:202px;top:214px;width:257px;height:21px;box-sizing:border-box;border:1px solid #bccde6;border-radius:2px;background:#fff;box-shadow:inset 1px 1px 0 #9c9c9c"></div>
<div style="left:460px;top:214px;width:61px;height:21px;box-sizing:border-box;border:1px solid #bccde6;border-radius:2px;background:#fff;box-shadow:inset 1px 1px 0 #9c9c9c"></div>
<div style="left:522px;top:214px;width:53px;height:21px;box-sizing:border-box;border:1px solid #bccde6;border-radius:2px;background:#fff;box-shadow:inset 1px 1px 0 #9c9c9c"></div>
<div style="left:576px;top:214px;width:60px;height:21px;box-sizing:border-box;border:1px solid #bccde6;border-radius:2px;background:#fff;box-shadow:inset 1px 1px 0 #9c9c9c"></div>
<div style="left:637px;top:214px;width:66px;height:21px;box-sizing:border-box;border:1px solid #bccde6;border-radius:2px;background:#fff;box-shadow:inset 1px 1px 0 #9c9c9c"></div>
<div style="left:704px;top:214px;width:39px;height:21px;box-sizing:border-box;border:1px solid #bccde6;border-radius:2px;background:#fff;box-shadow:inset 1px 1px 0 #9c9c9c"></div>
<div style="left:744px;top:214px;width:92px;height:21px;box-sizing:border-box;border:1px solid #bccde6;border-radius:2px;background:#fff;box-shadow:inset 1px 1px 0 #9c9c9c"></div>
<div style="left:841px;top:215px;width:86px;height:20px;box-sizing:border-box;border:1px solid #a2a2a2;border-right-color:#bcd0ea;border-bottom-color:#bcd0ea;border-radius:3px;background:#c0c0c0"></div>
<div class="t" style="left:842px;top:221.03px;width:86px;font-size:10.6px;color:#fafafa;text-align:center;font-family:'Liberation Sans', sans-serif;">Gerar Etiqueta</div>
<div class="t" style="left:841px;top:220.03px;width:86px;font-size:10.6px;color:#949494;text-align:center;font-family:'Liberation Sans', sans-serif;">Gerar Etiqueta</div>
<div style="left:29px;top:236px;width:39px;height:20px;box-sizing:border-box;border:1px solid #bccde6;border-radius:2px;background:#fff;box-shadow:inset 1px 1px 0 #9c9c9c"></div>
<div style="left:69px;top:236px;width:39px;height:20px;box-sizing:border-box;border:1px solid #bccde6;border-radius:2px;background:#fff;box-shadow:inset 1px 1px 0 #9c9c9c"></div>
<div style="left:109px;top:236px;width:39px;height:20px;box-sizing:border-box;border:1px solid #bccde6;border-radius:2px;background:#fff;box-shadow:inset 1px 1px 0 #9c9c9c"></div>
<div style="left:149px;top:236px;width:52px;height:20px;box-sizing:border-box;border:1px solid #bccde6;border-radius:2px;background:#fff;box-shadow:inset 1px 1px 0 #9c9c9c"></div>
<div style="left:202px;top:236px;width:257px;height:20px;box-sizing:border-box;border:1px solid #bccde6;border-radius:2px;background:#fff;box-shadow:inset 1px 1px 0 #9c9c9c"></div>
<div style="left:460px;top:236px;width:61px;height:20px;box-sizing:border-box;border:1px solid #bccde6;border-radius:2px;background:#fff;box-shadow:inset 1px 1px 0 #9c9c9c"></div>
<div style="left:522px;top:236px;width:53px;height:20px;box-sizing:border-box;border:1px solid #bccde6;border-radius:2px;background:#fff;box-shadow:inset 1px 1px 0 #9c9c9c"></div>
<div style="left:576px;top:236px;width:60px;height:20px;box-sizing:border-box;border:1px solid #bccde6;border-radius:2px;background:#fff;box-shadow:inset 1px 1px 0 #9c9c9c"></div>
<div style="left:637px;top:236px;width:66px;height:20px;box-sizing:border-box;border:1px solid #bccde6;border-radius:2px;background:#fff;box-shadow:inset 1px 1px 0 #9c9c9c"></div>
<div style="left:704px;top:236px;width:39px;height:20px;box-sizing:border-box;border:1px solid #bccde6;border-radius:2px;background:#fff;box-shadow:inset 1px 1px 0 #9c9c9c"></div>
<div style="left:744px;top:236px;width:92px;height:20px;box-sizing:border-box;border:1px solid #bccde6;border-radius:2px;background:#fff;box-shadow:inset 1px 1px 0 #9c9c9c"></div>
<div style="left:841px;top:237px;width:86px;height:19px;box-sizing:border-box;border:1px solid #a2a2a2;border-right-color:#bcd0ea;border-bottom-color:#bcd0ea;border-radius:3px;background:#c0c0c0"></div>
<div class="t" style="left:842px;top:243.03px;width:86px;font-size:10.6px;color:#fafafa;text-align:center;font-family:'Liberation Sans', sans-serif;">Gerar Etiqueta</div>
<div class="t" style="left:841px;top:242.03px;width:86px;font-size:10.6px;color:#949494;text-align:center;font-family:'Liberation Sans', sans-serif;">Gerar Etiqueta</div>
<div style="left:29px;top:257px;width:39px;height:20px;box-sizing:border-box;border:1px solid #bccde6;border-radius:2px;background:#fff;box-shadow:inset 1px 1px 0 #9c9c9c"></div>
<div style="left:69px;top:257px;width:39px;height:20px;box-sizing:border-box;border:1px solid #bccde6;border-radius:2px;background:#fff;box-shadow:inset 1px 1px 0 #9c9c9c"></div>
<div style="left:109px;top:257px;width:39px;height:20px;box-sizing:border-box;border:1px solid #bccde6;border-radius:2px;background:#fff;box-shadow:inset 1px 1px 0 #9c9c9c"></div>
<div style="left:149px;top:257px;width:52px;height:20px;box-sizing:border-box;border:1px solid #bccde6;border-radius:2px;background:#fff;box-shadow:inset 1px 1px 0 #9c9c9c"></div>
<div style="left:202px;top:257px;width:257px;height:20px;box-sizing:border-box;border:1px solid #bccde6;border-radius:2px;background:#fff;box-shadow:inset 1px 1px 0 #9c9c9c"></div>
<div style="left:460px;top:257px;width:61px;height:20px;box-sizing:border-box;border:1px solid #bccde6;border-radius:2px;background:#fff;box-shadow:inset 1px 1px 0 #9c9c9c"></div>
<div style="left:522px;top:257px;width:53px;height:20px;box-sizing:border-box;border:1px solid #bccde6;border-radius:2px;background:#fff;box-shadow:inset 1px 1px 0 #9c9c9c"></div>
<div style="left:576px;top:257px;width:60px;height:20px;box-sizing:border-box;border:1px solid #bccde6;border-radius:2px;background:#fff;box-shadow:inset 1px 1px 0 #9c9c9c"></div>
<div style="left:637px;top:257px;width:66px;height:20px;box-sizing:border-box;border:1px solid #bccde6;border-radius:2px;background:#fff;box-shadow:inset 1px 1px 0 #9c9c9c"></div>
<div style="left:704px;top:257px;width:39px;height:20px;box-sizing:border-box;border:1px solid #bccde6;border-radius:2px;background:#fff;box-shadow:inset 1px 1px 0 #9c9c9c"></div>
<div style="left:744px;top:257px;width:92px;height:20px;box-sizing:border-box;border:1px solid #bccde6;border-radius:2px;background:#fff;box-shadow:inset 1px 1px 0 #9c9c9c"></div>
<div style="left:841px;top:258px;width:86px;height:19px;box-sizing:border-box;border:1px solid #a2a2a2;border-right-color:#bcd0ea;border-bottom-color:#bcd0ea;border-radius:3px;background:#c0c0c0"></div>
<div class="t" style="left:842px;top:264.03px;width:86px;font-size:10.6px;color:#fafafa;text-align:center;font-family:'Liberation Sans', sans-serif;">Gerar Etiqueta</div>
<div class="t" style="left:841px;top:263.03px;width:86px;font-size:10.6px;color:#949494;text-align:center;font-family:'Liberation Sans', sans-serif;">Gerar Etiqueta</div>
<div style="left:29px;top:278px;width:39px;height:21px;box-sizing:border-box;border:1px solid #bccde6;border-radius:2px;background:#fff;box-shadow:inset 1px 1px 0 #9c9c9c"></div>
<div style="left:69px;top:278px;width:39px;height:21px;box-sizing:border-box;border:1px solid #bccde6;border-radius:2px;background:#fff;box-shadow:inset 1px 1px 0 #9c9c9c"></div>
<div style="left:109px;top:278px;width:39px;height:21px;box-sizing:border-box;border:1px solid #bccde6;border-radius:2px;background:#fff;box-shadow:inset 1px 1px 0 #9c9c9c"></div>
<div style="left:149px;top:278px;width:52px;height:21px;box-sizing:border-box;border:1px solid #bccde6;border-radius:2px;background:#fff;box-shadow:inset 1px 1px 0 #9c9c9c"></div>
<div style="left:202px;top:278px;width:257px;height:21px;box-sizing:border-box;border:1px solid #bccde6;border-radius:2px;background:#fff;box-shadow:inset 1px 1px 0 #9c9c9c"></div>
<div style="left:460px;top:278px;width:61px;height:21px;box-sizing:border-box;border:1px solid #bccde6;border-radius:2px;background:#fff;box-shadow:inset 1px 1px 0 #9c9c9c"></div>
<div style="left:522px;top:278px;width:53px;height:21px;box-sizing:border-box;border:1px solid #bccde6;border-radius:2px;background:#fff;box-shadow:inset 1px 1px 0 #9c9c9c"></div>
<div style="left:576px;top:278px;width:60px;height:21px;box-sizing:border-box;border:1px solid #bccde6;border-radius:2px;background:#fff;box-shadow:inset 1px 1px 0 #9c9c9c"></div>
<div style="left:637px;top:278px;width:66px;height:21px;box-sizing:border-box;border:1px solid #bccde6;border-radius:2px;background:#fff;box-shadow:inset 1px 1px 0 #9c9c9c"></div>
<div style="left:704px;top:278px;width:39px;height:21px;box-sizing:border-box;border:1px solid #bccde6;border-radius:2px;background:#fff;box-shadow:inset 1px 1px 0 #9c9c9c"></div>
<div style="left:744px;top:278px;width:92px;height:21px;box-sizing:border-box;border:1px solid #bccde6;border-radius:2px;background:#fff;box-shadow:inset 1px 1px 0 #9c9c9c"></div>
<div style="left:841px;top:279px;width:86px;height:20px;box-sizing:border-box;border:1px solid #a2a2a2;border-right-color:#bcd0ea;border-bottom-color:#bcd0ea;border-radius:3px;background:#c0c0c0"></div>
<div class="t" style="left:842px;top:285.03px;width:86px;font-size:10.6px;color:#fafafa;text-align:center;font-family:'Liberation Sans', sans-serif;">Gerar Etiqueta</div>
<div class="t" style="left:841px;top:284.03px;width:86px;font-size:10.6px;color:#949494;text-align:center;font-family:'Liberation Sans', sans-serif;">Gerar Etiqueta</div>
<div style="left:29px;top:300px;width:39px;height:20px;box-sizing:border-box;border:1px solid #bccde6;border-radius:2px;background:#fff;box-shadow:inset 1px 1px 0 #9c9c9c"></div>
<div style="left:69px;top:300px;width:39px;height:20px;box-sizing:border-box;border:1px solid #bccde6;border-radius:2px;background:#fff;box-shadow:inset 1px 1px 0 #9c9c9c"></div>
<div style="left:109px;top:300px;width:39px;height:20px;box-sizing:border-box;border:1px solid #bccde6;border-radius:2px;background:#fff;box-shadow:inset 1px 1px 0 #9c9c9c"></div>
<div style="left:149px;top:300px;width:52px;height:20px;box-sizing:border-box;border:1px solid #bccde6;border-radius:2px;background:#fff;box-shadow:inset 1px 1px 0 #9c9c9c"></div>
<div style="left:202px;top:300px;width:257px;height:20px;box-sizing:border-box;border:1px solid #bccde6;border-radius:2px;background:#fff;box-shadow:inset 1px 1px 0 #9c9c9c"></div>
<div style="left:460px;top:300px;width:61px;height:20px;box-sizing:border-box;border:1px solid #bccde6;border-radius:2px;background:#fff;box-shadow:inset 1px 1px 0 #9c9c9c"></div>
<div style="left:522px;top:300px;width:53px;height:20px;box-sizing:border-box;border:1px solid #bccde6;border-radius:2px;background:#fff;box-shadow:inset 1px 1px 0 #9c9c9c"></div>
<div style="left:576px;top:300px;width:60px;height:20px;box-sizing:border-box;border:1px solid #bccde6;border-radius:2px;background:#fff;box-shadow:inset 1px 1px 0 #9c9c9c"></div>
<div style="left:637px;top:300px;width:66px;height:20px;box-sizing:border-box;border:1px solid #bccde6;border-radius:2px;background:#fff;box-shadow:inset 1px 1px 0 #9c9c9c"></div>
<div style="left:704px;top:300px;width:39px;height:20px;box-sizing:border-box;border:1px solid #bccde6;border-radius:2px;background:#fff;box-shadow:inset 1px 1px 0 #9c9c9c"></div>
<div style="left:744px;top:300px;width:92px;height:20px;box-sizing:border-box;border:1px solid #bccde6;border-radius:2px;background:#fff;box-shadow:inset 1px 1px 0 #9c9c9c"></div>
<div style="left:841px;top:301px;width:86px;height:19px;box-sizing:border-box;border:1px solid #a2a2a2;border-right-color:#bcd0ea;border-bottom-color:#bcd0ea;border-radius:3px;background:#c0c0c0"></div>
<div class="t" style="left:842px;top:307.03px;width:86px;font-size:10.6px;color:#fafafa;text-align:center;font-family:'Liberation Sans', sans-serif;">Gerar Etiqueta</div>
<div class="t" style="left:841px;top:306.03px;width:86px;font-size:10.6px;color:#949494;text-align:center;font-family:'Liberation Sans', sans-serif;">Gerar Etiqueta</div>
<div style="left:29px;top:321px;width:39px;height:21px;box-sizing:border-box;border:1px solid #bccde6;border-radius:2px;background:#fff;box-shadow:inset 1px 1px 0 #9c9c9c"></div>
<div style="left:69px;top:321px;width:39px;height:21px;box-sizing:border-box;border:1px solid #bccde6;border-radius:2px;background:#fff;box-shadow:inset 1px 1px 0 #9c9c9c"></div>
<div style="left:109px;top:321px;width:39px;height:21px;box-sizing:border-box;border:1px solid #bccde6;border-radius:2px;background:#fff;box-shadow:inset 1px 1px 0 #9c9c9c"></div>
<div style="left:149px;top:321px;width:52px;height:21px;box-sizing:border-box;border:1px solid #bccde6;border-radius:2px;background:#fff;box-shadow:inset 1px 1px 0 #9c9c9c"></div>
<div style="left:202px;top:321px;width:257px;height:21px;box-sizing:border-box;border:1px solid #bccde6;border-radius:2px;background:#fff;box-shadow:inset 1px 1px 0 #9c9c9c"></div>
<div style="left:460px;top:321px;width:61px;height:21px;box-sizing:border-box;border:1px solid #bccde6;border-radius:2px;background:#fff;box-shadow:inset 1px 1px 0 #9c9c9c"></div>
<div style="left:522px;top:321px;width:53px;height:21px;box-sizing:border-box;border:1px solid #bccde6;border-radius:2px;background:#fff;box-shadow:inset 1px 1px 0 #9c9c9c"></div>
<div style="left:576px;top:321px;width:60px;height:21px;box-sizing:border-box;border:1px solid #bccde6;border-radius:2px;background:#fff;box-shadow:inset 1px 1px 0 #9c9c9c"></div>
<div style="left:637px;top:321px;width:66px;height:21px;box-sizing:border-box;border:1px solid #bccde6;border-radius:2px;background:#fff;box-shadow:inset 1px 1px 0 #9c9c9c"></div>
<div style="left:704px;top:321px;width:39px;height:21px;box-sizing:border-box;border:1px solid #bccde6;border-radius:2px;background:#fff;box-shadow:inset 1px 1px 0 #9c9c9c"></div>
<div style="left:744px;top:321px;width:92px;height:21px;box-sizing:border-box;border:1px solid #bccde6;border-radius:2px;background:#fff;box-shadow:inset 1px 1px 0 #9c9c9c"></div>
<div style="left:841px;top:322px;width:86px;height:20px;box-sizing:border-box;border:1px solid #a2a2a2;border-right-color:#bcd0ea;border-bottom-color:#bcd0ea;border-radius:3px;background:#c0c0c0"></div>
<div class="t" style="left:842px;top:328.03px;width:86px;font-size:10.6px;color:#fafafa;text-align:center;font-family:'Liberation Sans', sans-serif;">Gerar Etiqueta</div>
<div class="t" style="left:841px;top:327.03px;width:86px;font-size:10.6px;color:#949494;text-align:center;font-family:'Liberation Sans', sans-serif;">Gerar Etiqueta</div>
<div style="left:29px;top:342px;width:39px;height:21px;box-sizing:border-box;border:1px solid #bccde6;border-radius:2px;background:#fff;box-shadow:inset 1px 1px 0 #9c9c9c"></div>
<div style="left:69px;top:342px;width:39px;height:21px;box-sizing:border-box;border:1px solid #bccde6;border-radius:2px;background:#fff;box-shadow:inset 1px 1px 0 #9c9c9c"></div>
<div style="left:109px;top:342px;width:39px;height:21px;box-sizing:border-box;border:1px solid #bccde6;border-radius:2px;background:#fff;box-shadow:inset 1px 1px 0 #9c9c9c"></div>
<div style="left:149px;top:342px;width:52px;height:21px;box-sizing:border-box;border:1px solid #bccde6;border-radius:2px;background:#fff;box-shadow:inset 1px 1px 0 #9c9c9c"></div>
<div style="left:202px;top:342px;width:257px;height:21px;box-sizing:border-box;border:1px solid #bccde6;border-radius:2px;background:#fff;box-shadow:inset 1px 1px 0 #9c9c9c"></div>
<div style="left:460px;top:342px;width:61px;height:21px;box-sizing:border-box;border:1px solid #bccde6;border-radius:2px;background:#fff;box-shadow:inset 1px 1px 0 #9c9c9c"></div>
<div style="left:522px;top:342px;width:53px;height:21px;box-sizing:border-box;border:1px solid #bccde6;border-radius:2px;background:#fff;box-shadow:inset 1px 1px 0 #9c9c9c"></div>
<div style="left:576px;top:342px;width:60px;height:21px;box-sizing:border-box;border:1px solid #bccde6;border-radius:2px;background:#fff;box-shadow:inset 1px 1px 0 #9c9c9c"></div>
<div style="left:637px;top:342px;width:66px;height:21px;box-sizing:border-box;border:1px solid #bccde6;border-radius:2px;background:#fff;box-shadow:inset 1px 1px 0 #9c9c9c"></div>
<div style="left:704px;top:342px;width:39px;height:21px;box-sizing:border-box;border:1px solid #bccde6;border-radius:2px;background:#fff;box-shadow:inset 1px 1px 0 #9c9c9c"></div>
<div style="left:744px;top:342px;width:92px;height:21px;box-sizing:border-box;border:1px solid #bccde6;border-radius:2px;background:#fff;box-shadow:inset 1px 1px 0 #9c9c9c"></div>
<div style="left:841px;top:343px;width:86px;height:20px;box-sizing:border-box;border:1px solid #a2a2a2;border-right-color:#bcd0ea;border-bottom-color:#bcd0ea;border-radius:3px;background:#c0c0c0"></div>
<div class="t" style="left:842px;top:349.03px;width:86px;font-size:10.6px;color:#fafafa;text-align:center;font-family:'Liberation Sans', sans-serif;">Gerar Etiqueta</div>
<div class="t" style="left:841px;top:348.03px;width:86px;font-size:10.6px;color:#949494;text-align:center;font-family:'Liberation Sans', sans-serif;">Gerar Etiqueta</div>
<div style="left:29px;top:364px;width:39px;height:20px;box-sizing:border-box;border:1px solid #bccde6;border-radius:2px;background:#fff;box-shadow:inset 1px 1px 0 #9c9c9c"></div>
<div style="left:69px;top:364px;width:39px;height:20px;box-sizing:border-box;border:1px solid #bccde6;border-radius:2px;background:#fff;box-shadow:inset 1px 1px 0 #9c9c9c"></div>
<div style="left:109px;top:364px;width:39px;height:20px;box-sizing:border-box;border:1px solid #bccde6;border-radius:2px;background:#fff;box-shadow:inset 1px 1px 0 #9c9c9c"></div>
<div style="left:149px;top:364px;width:52px;height:20px;box-sizing:border-box;border:1px solid #bccde6;border-radius:2px;background:#fff;box-shadow:inset 1px 1px 0 #9c9c9c"></div>
<div style="left:202px;top:364px;width:257px;height:20px;box-sizing:border-box;border:1px solid #bccde6;border-radius:2px;background:#fff;box-shadow:inset 1px 1px 0 #9c9c9c"></div>
<div style="left:460px;top:364px;width:61px;height:20px;box-sizing:border-box;border:1px solid #bccde6;border-radius:2px;background:#fff;box-shadow:inset 1px 1px 0 #9c9c9c"></div>
<div style="left:522px;top:364px;width:53px;height:20px;box-sizing:border-box;border:1px solid #bccde6;border-radius:2px;background:#fff;box-shadow:inset 1px 1px 0 #9c9c9c"></div>
<div style="left:576px;top:364px;width:60px;height:20px;box-sizing:border-box;border:1px solid #bccde6;border-radius:2px;background:#fff;box-shadow:inset 1px 1px 0 #9c9c9c"></div>
<div style="left:637px;top:364px;width:66px;height:20px;box-sizing:border-box;border:1px solid #bccde6;border-radius:2px;background:#fff;box-shadow:inset 1px 1px 0 #9c9c9c"></div>
<div style="left:704px;top:364px;width:39px;height:20px;box-sizing:border-box;border:1px solid #bccde6;border-radius:2px;background:#fff;box-shadow:inset 1px 1px 0 #9c9c9c"></div>
<div style="left:744px;top:364px;width:92px;height:20px;box-sizing:border-box;border:1px solid #bccde6;border-radius:2px;background:#fff;box-shadow:inset 1px 1px 0 #9c9c9c"></div>
<div style="left:841px;top:365px;width:86px;height:19px;box-sizing:border-box;border:1px solid #a2a2a2;border-right-color:#bcd0ea;border-bottom-color:#bcd0ea;border-radius:3px;background:#c0c0c0"></div>
<div class="t" style="left:842px;top:371.03px;width:86px;font-size:10.6px;color:#fafafa;text-align:center;font-family:'Liberation Sans', sans-serif;">Gerar Etiqueta</div>
<div class="t" style="left:841px;top:370.03px;width:86px;font-size:10.6px;color:#949494;text-align:center;font-family:'Liberation Sans', sans-serif;">Gerar Etiqueta</div>
<div style="left:29px;top:385px;width:39px;height:21px;box-sizing:border-box;border:1px solid #bccde6;border-radius:2px;background:#fff;box-shadow:inset 1px 1px 0 #9c9c9c"></div>
<div style="left:69px;top:385px;width:39px;height:21px;box-sizing:border-box;border:1px solid #bccde6;border-radius:2px;background:#fff;box-shadow:inset 1px 1px 0 #9c9c9c"></div>
<div style="left:109px;top:385px;width:39px;height:21px;box-sizing:border-box;border:1px solid #bccde6;border-radius:2px;background:#fff;box-shadow:inset 1px 1px 0 #9c9c9c"></div>
<div style="left:149px;top:385px;width:52px;height:21px;box-sizing:border-box;border:1px solid #bccde6;border-radius:2px;background:#fff;box-shadow:inset 1px 1px 0 #9c9c9c"></div>
<div style="left:202px;top:385px;width:257px;height:21px;box-sizing:border-box;border:1px solid #bccde6;border-radius:2px;background:#fff;box-shadow:inset 1px 1px 0 #9c9c9c"></div>
<div style="left:460px;top:385px;width:61px;height:21px;box-sizing:border-box;border:1px solid #bccde6;border-radius:2px;background:#fff;box-shadow:inset 1px 1px 0 #9c9c9c"></div>
<div style="left:522px;top:385px;width:53px;height:21px;box-sizing:border-box;border:1px solid #bccde6;border-radius:2px;background:#fff;box-shadow:inset 1px 1px 0 #9c9c9c"></div>
<div style="left:576px;top:385px;width:60px;height:21px;box-sizing:border-box;border:1px solid #bccde6;border-radius:2px;background:#fff;box-shadow:inset 1px 1px 0 #9c9c9c"></div>
<div style="left:637px;top:385px;width:66px;height:21px;box-sizing:border-box;border:1px solid #bccde6;border-radius:2px;background:#fff;box-shadow:inset 1px 1px 0 #9c9c9c"></div>
<div style="left:704px;top:385px;width:39px;height:21px;box-sizing:border-box;border:1px solid #bccde6;border-radius:2px;background:#fff;box-shadow:inset 1px 1px 0 #9c9c9c"></div>
<div style="left:744px;top:385px;width:92px;height:21px;box-sizing:border-box;border:1px solid #bccde6;border-radius:2px;background:#fff;box-shadow:inset 1px 1px 0 #9c9c9c"></div>
<div style="left:841px;top:386px;width:86px;height:20px;box-sizing:border-box;border:1px solid #a2a2a2;border-right-color:#bcd0ea;border-bottom-color:#bcd0ea;border-radius:3px;background:#c0c0c0"></div>
<div class="t" style="left:842px;top:392.03px;width:86px;font-size:10.6px;color:#fafafa;text-align:center;font-family:'Liberation Sans', sans-serif;">Gerar Etiqueta</div>
<div class="t" style="left:841px;top:391.03px;width:86px;font-size:10.6px;color:#949494;text-align:center;font-family:'Liberation Sans', sans-serif;">Gerar Etiqueta</div>
<div style="left:29px;top:407px;width:39px;height:20px;box-sizing:border-box;border:1px solid #bccde6;border-radius:2px;background:#fff;box-shadow:inset 1px 1px 0 #9c9c9c"></div>
<div style="left:69px;top:407px;width:39px;height:20px;box-sizing:border-box;border:1px solid #bccde6;border-radius:2px;background:#fff;box-shadow:inset 1px 1px 0 #9c9c9c"></div>
<div style="left:109px;top:407px;width:39px;height:20px;box-sizing:border-box;border:1px solid #bccde6;border-radius:2px;background:#fff;box-shadow:inset 1px 1px 0 #9c9c9c"></div>
<div style="left:149px;top:407px;width:52px;height:20px;box-sizing:border-box;border:1px solid #bccde6;border-radius:2px;background:#fff;box-shadow:inset 1px 1px 0 #9c9c9c"></div>
<div style="left:202px;top:407px;width:257px;height:20px;box-sizing:border-box;border:1px solid #bccde6;border-radius:2px;background:#fff;box-shadow:inset 1px 1px 0 #9c9c9c"></div>
<div style="left:460px;top:407px;width:61px;height:20px;box-sizing:border-box;border:1px solid #bccde6;border-radius:2px;background:#fff;box-shadow:inset 1px 1px 0 #9c9c9c"></div>
<div style="left:522px;top:407px;width:53px;height:20px;box-sizing:border-box;border:1px solid #bccde6;border-radius:2px;background:#fff;box-shadow:inset 1px 1px 0 #9c9c9c"></div>
<div style="left:576px;top:407px;width:60px;height:20px;box-sizing:border-box;border:1px solid #bccde6;border-radius:2px;background:#fff;box-shadow:inset 1px 1px 0 #9c9c9c"></div>
<div style="left:637px;top:407px;width:66px;height:20px;box-sizing:border-box;border:1px solid #bccde6;border-radius:2px;background:#fff;box-shadow:inset 1px 1px 0 #9c9c9c"></div>
<div style="left:704px;top:407px;width:39px;height:20px;box-sizing:border-box;border:1px solid #bccde6;border-radius:2px;background:#fff;box-shadow:inset 1px 1px 0 #9c9c9c"></div>
<div style="left:744px;top:407px;width:92px;height:20px;box-sizing:border-box;border:1px solid #bccde6;border-radius:2px;background:#fff;box-shadow:inset 1px 1px 0 #9c9c9c"></div>
<div style="left:841px;top:408px;width:86px;height:19px;box-sizing:border-box;border:1px solid #a2a2a2;border-right-color:#bcd0ea;border-bottom-color:#bcd0ea;border-radius:3px;background:#c0c0c0"></div>
<div class="t" style="left:842px;top:414.03px;width:86px;font-size:10.6px;color:#fafafa;text-align:center;font-family:'Liberation Sans', sans-serif;">Gerar Etiqueta</div>
<div class="t" style="left:841px;top:413.03px;width:86px;font-size:10.6px;color:#949494;text-align:center;font-family:'Liberation Sans', sans-serif;">Gerar Etiqueta</div>
<div style="left:29px;top:428px;width:39px;height:20px;box-sizing:border-box;border:1px solid #bccde6;border-radius:2px;background:#fff;box-shadow:inset 1px 1px 0 #9c9c9c"></div>
<div style="left:69px;top:428px;width:39px;height:20px;box-sizing:border-box;border:1px solid #bccde6;border-radius:2px;background:#fff;box-shadow:inset 1px 1px 0 #9c9c9c"></div>
<div style="left:109px;top:428px;width:39px;height:20px;box-sizing:border-box;border:1px solid #bccde6;border-radius:2px;background:#fff;box-shadow:inset 1px 1px 0 #9c9c9c"></div>
<div style="left:149px;top:428px;width:52px;height:20px;box-sizing:border-box;border:1px solid #bccde6;border-radius:2px;background:#fff;box-shadow:inset 1px 1px 0 #9c9c9c"></div>
<div style="left:202px;top:428px;width:257px;height:20px;box-sizing:border-box;border:1px solid #bccde6;border-radius:2px;background:#fff;box-shadow:inset 1px 1px 0 #9c9c9c"></div>
<div style="left:460px;top:428px;width:61px;height:20px;box-sizing:border-box;border:1px solid #bccde6;border-radius:2px;background:#fff;box-shadow:inset 1px 1px 0 #9c9c9c"></div>
<div style="left:522px;top:428px;width:53px;height:20px;box-sizing:border-box;border:1px solid #bccde6;border-radius:2px;background:#fff;box-shadow:inset 1px 1px 0 #9c9c9c"></div>
<div style="left:576px;top:428px;width:60px;height:20px;box-sizing:border-box;border:1px solid #bccde6;border-radius:2px;background:#fff;box-shadow:inset 1px 1px 0 #9c9c9c"></div>
<div style="left:637px;top:428px;width:66px;height:20px;box-sizing:border-box;border:1px solid #bccde6;border-radius:2px;background:#fff;box-shadow:inset 1px 1px 0 #9c9c9c"></div>
<div style="left:704px;top:428px;width:39px;height:20px;box-sizing:border-box;border:1px solid #bccde6;border-radius:2px;background:#fff;box-shadow:inset 1px 1px 0 #9c9c9c"></div>
<div style="left:744px;top:428px;width:92px;height:20px;box-sizing:border-box;border:1px solid #bccde6;border-radius:2px;background:#fff;box-shadow:inset 1px 1px 0 #9c9c9c"></div>
<div style="left:841px;top:429px;width:86px;height:19px;box-sizing:border-box;border:1px solid #a2a2a2;border-right-color:#bcd0ea;border-bottom-color:#bcd0ea;border-radius:3px;background:#c0c0c0"></div>
<div class="t" style="left:842px;top:435.03px;width:86px;font-size:10.6px;color:#fafafa;text-align:center;font-family:'Liberation Sans', sans-serif;">Gerar Etiqueta</div>
<div class="t" style="left:841px;top:434.03px;width:86px;font-size:10.6px;color:#949494;text-align:center;font-family:'Liberation Sans', sans-serif;">Gerar Etiqueta</div>
<div style="left:29px;top:449px;width:39px;height:21px;box-sizing:border-box;border:1px solid #bccde6;border-radius:2px;background:#fff;box-shadow:inset 1px 1px 0 #9c9c9c"></div>
<div style="left:69px;top:449px;width:39px;height:21px;box-sizing:border-box;border:1px solid #bccde6;border-radius:2px;background:#fff;box-shadow:inset 1px 1px 0 #9c9c9c"></div>
<div style="left:109px;top:449px;width:39px;height:21px;box-sizing:border-box;border:1px solid #bccde6;border-radius:2px;background:#fff;box-shadow:inset 1px 1px 0 #9c9c9c"></div>
<div style="left:149px;top:449px;width:52px;height:21px;box-sizing:border-box;border:1px solid #bccde6;border-radius:2px;background:#fff;box-shadow:inset 1px 1px 0 #9c9c9c"></div>
<div style="left:202px;top:449px;width:257px;height:21px;box-sizing:border-box;border:1px solid #bccde6;border-radius:2px;background:#fff;box-shadow:inset 1px 1px 0 #9c9c9c"></div>
<div style="left:460px;top:449px;width:61px;height:21px;box-sizing:border-box;border:1px solid #bccde6;border-radius:2px;background:#fff;box-shadow:inset 1px 1px 0 #9c9c9c"></div>
<div style="left:522px;top:449px;width:53px;height:21px;box-sizing:border-box;border:1px solid #bccde6;border-radius:2px;background:#fff;box-shadow:inset 1px 1px 0 #9c9c9c"></div>
<div style="left:576px;top:449px;width:60px;height:21px;box-sizing:border-box;border:1px solid #bccde6;border-radius:2px;background:#fff;box-shadow:inset 1px 1px 0 #9c9c9c"></div>
<div style="left:637px;top:449px;width:66px;height:21px;box-sizing:border-box;border:1px solid #bccde6;border-radius:2px;background:#fff;box-shadow:inset 1px 1px 0 #9c9c9c"></div>
<div style="left:704px;top:449px;width:39px;height:21px;box-sizing:border-box;border:1px solid #bccde6;border-radius:2px;background:#fff;box-shadow:inset 1px 1px 0 #9c9c9c"></div>
<div style="left:744px;top:449px;width:92px;height:21px;box-sizing:border-box;border:1px solid #bccde6;border-radius:2px;background:#fff;box-shadow:inset 1px 1px 0 #9c9c9c"></div>
<div style="left:841px;top:450px;width:86px;height:20px;box-sizing:border-box;border:1px solid #a2a2a2;border-right-color:#bcd0ea;border-bottom-color:#bcd0ea;border-radius:3px;background:#c0c0c0"></div>
<div class="t" style="left:842px;top:456.03px;width:86px;font-size:10.6px;color:#fafafa;text-align:center;font-family:'Liberation Sans', sans-serif;">Gerar Etiqueta</div>
<div class="t" style="left:841px;top:455.03px;width:86px;font-size:10.6px;color:#949494;text-align:center;font-family:'Liberation Sans', sans-serif;">Gerar Etiqueta</div>
<div style="left:29px;top:471px;width:39px;height:20px;box-sizing:border-box;border:1px solid #bccde6;border-radius:2px;background:#fff;box-shadow:inset 1px 1px 0 #9c9c9c"></div>
<div style="left:69px;top:471px;width:39px;height:20px;box-sizing:border-box;border:1px solid #bccde6;border-radius:2px;background:#fff;box-shadow:inset 1px 1px 0 #9c9c9c"></div>
<div style="left:109px;top:471px;width:39px;height:20px;box-sizing:border-box;border:1px solid #bccde6;border-radius:2px;background:#fff;box-shadow:inset 1px 1px 0 #9c9c9c"></div>
<div style="left:149px;top:471px;width:52px;height:20px;box-sizing:border-box;border:1px solid #bccde6;border-radius:2px;background:#fff;box-shadow:inset 1px 1px 0 #9c9c9c"></div>
<div style="left:202px;top:471px;width:257px;height:20px;box-sizing:border-box;border:1px solid #bccde6;border-radius:2px;background:#fff;box-shadow:inset 1px 1px 0 #9c9c9c"></div>
<div style="left:460px;top:471px;width:61px;height:20px;box-sizing:border-box;border:1px solid #bccde6;border-radius:2px;background:#fff;box-shadow:inset 1px 1px 0 #9c9c9c"></div>
<div style="left:522px;top:471px;width:53px;height:20px;box-sizing:border-box;border:1px solid #bccde6;border-radius:2px;background:#fff;box-shadow:inset 1px 1px 0 #9c9c9c"></div>
<div style="left:576px;top:471px;width:60px;height:20px;box-sizing:border-box;border:1px solid #bccde6;border-radius:2px;background:#fff;box-shadow:inset 1px 1px 0 #9c9c9c"></div>
<div style="left:637px;top:471px;width:66px;height:20px;box-sizing:border-box;border:1px solid #bccde6;border-radius:2px;background:#fff;box-shadow:inset 1px 1px 0 #9c9c9c"></div>
<div style="left:704px;top:471px;width:39px;height:20px;box-sizing:border-box;border:1px solid #bccde6;border-radius:2px;background:#fff;box-shadow:inset 1px 1px 0 #9c9c9c"></div>
<div style="left:744px;top:471px;width:92px;height:20px;box-sizing:border-box;border:1px solid #bccde6;border-radius:2px;background:#fff;box-shadow:inset 1px 1px 0 #9c9c9c"></div>
<div style="left:841px;top:472px;width:86px;height:19px;box-sizing:border-box;border:1px solid #a2a2a2;border-right-color:#bcd0ea;border-bottom-color:#bcd0ea;border-radius:3px;background:#c0c0c0"></div>
<div class="t" style="left:842px;top:478.03px;width:86px;font-size:10.6px;color:#fafafa;text-align:center;font-family:'Liberation Sans', sans-serif;">Gerar Etiqueta</div>
<div class="t" style="left:841px;top:477.03px;width:86px;font-size:10.6px;color:#949494;text-align:center;font-family:'Liberation Sans', sans-serif;">Gerar Etiqueta</div>
<div style="left:29px;top:492px;width:39px;height:20px;box-sizing:border-box;border:1px solid #bccde6;border-radius:2px;background:#fff;box-shadow:inset 1px 1px 0 #9c9c9c"></div>
<div style="left:69px;top:492px;width:39px;height:20px;box-sizing:border-box;border:1px solid #bccde6;border-radius:2px;background:#fff;box-shadow:inset 1px 1px 0 #9c9c9c"></div>
<div style="left:109px;top:492px;width:39px;height:20px;box-sizing:border-box;border:1px solid #bccde6;border-radius:2px;background:#fff;box-shadow:inset 1px 1px 0 #9c9c9c"></div>
<div style="left:149px;top:492px;width:52px;height:20px;box-sizing:border-box;border:1px solid #bccde6;border-radius:2px;background:#fff;box-shadow:inset 1px 1px 0 #9c9c9c"></div>
<div style="left:202px;top:492px;width:257px;height:20px;box-sizing:border-box;border:1px solid #bccde6;border-radius:2px;background:#fff;box-shadow:inset 1px 1px 0 #9c9c9c"></div>
<div style="left:460px;top:492px;width:61px;height:20px;box-sizing:border-box;border:1px solid #bccde6;border-radius:2px;background:#fff;box-shadow:inset 1px 1px 0 #9c9c9c"></div>
<div style="left:522px;top:492px;width:53px;height:20px;box-sizing:border-box;border:1px solid #bccde6;border-radius:2px;background:#fff;box-shadow:inset 1px 1px 0 #9c9c9c"></div>
<div style="left:576px;top:492px;width:60px;height:20px;box-sizing:border-box;border:1px solid #bccde6;border-radius:2px;background:#fff;box-shadow:inset 1px 1px 0 #9c9c9c"></div>
<div style="left:637px;top:492px;width:66px;height:20px;box-sizing:border-box;border:1px solid #bccde6;border-radius:2px;background:#fff;box-shadow:inset 1px 1px 0 #9c9c9c"></div>
<div style="left:704px;top:492px;width:39px;height:20px;box-sizing:border-box;border:1px solid #bccde6;border-radius:2px;background:#fff;box-shadow:inset 1px 1px 0 #9c9c9c"></div>
<div style="left:744px;top:492px;width:92px;height:20px;box-sizing:border-box;border:1px solid #bccde6;border-radius:2px;background:#fff;box-shadow:inset 1px 1px 0 #9c9c9c"></div>
<div style="left:841px;top:493px;width:86px;height:19px;box-sizing:border-box;border:1px solid #a2a2a2;border-right-color:#bcd0ea;border-bottom-color:#bcd0ea;border-radius:3px;background:#c0c0c0"></div>
<div class="t" style="left:842px;top:499.03px;width:86px;font-size:10.6px;color:#fafafa;text-align:center;font-family:'Liberation Sans', sans-serif;">Gerar Etiqueta</div>
<div class="t" style="left:841px;top:498.03px;width:86px;font-size:10.6px;color:#949494;text-align:center;font-family:'Liberation Sans', sans-serif;">Gerar Etiqueta</div>
<div style="left:29px;top:513px;width:39px;height:21px;box-sizing:border-box;border:1px solid #bccde6;border-radius:2px;background:#fff;box-shadow:inset 1px 1px 0 #9c9c9c"></div>
<div style="left:69px;top:513px;width:39px;height:21px;box-sizing:border-box;border:1px solid #bccde6;border-radius:2px;background:#fff;box-shadow:inset 1px 1px 0 #9c9c9c"></div>
<div style="left:109px;top:513px;width:39px;height:21px;box-sizing:border-box;border:1px solid #bccde6;border-radius:2px;background:#fff;box-shadow:inset 1px 1px 0 #9c9c9c"></div>
<div style="left:149px;top:513px;width:52px;height:21px;box-sizing:border-box;border:1px solid #bccde6;border-radius:2px;background:#fff;box-shadow:inset 1px 1px 0 #9c9c9c"></div>
<div style="left:202px;top:513px;width:257px;height:21px;box-sizing:border-box;border:1px solid #bccde6;border-radius:2px;background:#fff;box-shadow:inset 1px 1px 0 #9c9c9c"></div>
<div style="left:460px;top:513px;width:61px;height:21px;box-sizing:border-box;border:1px solid #bccde6;border-radius:2px;background:#fff;box-shadow:inset 1px 1px 0 #9c9c9c"></div>
<div style="left:522px;top:513px;width:53px;height:21px;box-sizing:border-box;border:1px solid #bccde6;border-radius:2px;background:#fff;box-shadow:inset 1px 1px 0 #9c9c9c"></div>
<div style="left:576px;top:513px;width:60px;height:21px;box-sizing:border-box;border:1px solid #bccde6;border-radius:2px;background:#fff;box-shadow:inset 1px 1px 0 #9c9c9c"></div>
<div style="left:637px;top:513px;width:66px;height:21px;box-sizing:border-box;border:1px solid #bccde6;border-radius:2px;background:#fff;box-shadow:inset 1px 1px 0 #9c9c9c"></div>
<div style="left:704px;top:513px;width:39px;height:21px;box-sizing:border-box;border:1px solid #bccde6;border-radius:2px;background:#fff;box-shadow:inset 1px 1px 0 #9c9c9c"></div>
<div style="left:744px;top:513px;width:92px;height:21px;box-sizing:border-box;border:1px solid #bccde6;border-radius:2px;background:#fff;box-shadow:inset 1px 1px 0 #9c9c9c"></div>
<div style="left:841px;top:514px;width:86px;height:20px;box-sizing:border-box;border:1px solid #a2a2a2;border-right-color:#bcd0ea;border-bottom-color:#bcd0ea;border-radius:3px;background:#c0c0c0"></div>
<div class="t" style="left:842px;top:520.03px;width:86px;font-size:10.6px;color:#fafafa;text-align:center;font-family:'Liberation Sans', sans-serif;">Gerar Etiqueta</div>
<div class="t" style="left:841px;top:519.03px;width:86px;font-size:10.6px;color:#949494;text-align:center;font-family:'Liberation Sans', sans-serif;">Gerar Etiqueta</div>
<div style="left:29px;top:535px;width:39px;height:20px;box-sizing:border-box;border:1px solid #bccde6;border-radius:2px;background:#fff;box-shadow:inset 1px 1px 0 #9c9c9c"></div>
<div style="left:69px;top:535px;width:39px;height:20px;box-sizing:border-box;border:1px solid #bccde6;border-radius:2px;background:#fff;box-shadow:inset 1px 1px 0 #9c9c9c"></div>
<div style="left:109px;top:535px;width:39px;height:20px;box-sizing:border-box;border:1px solid #bccde6;border-radius:2px;background:#fff;box-shadow:inset 1px 1px 0 #9c9c9c"></div>
<div style="left:149px;top:535px;width:52px;height:20px;box-sizing:border-box;border:1px solid #bccde6;border-radius:2px;background:#fff;box-shadow:inset 1px 1px 0 #9c9c9c"></div>
<div style="left:202px;top:535px;width:257px;height:20px;box-sizing:border-box;border:1px solid #bccde6;border-radius:2px;background:#fff;box-shadow:inset 1px 1px 0 #9c9c9c"></div>
<div style="left:460px;top:535px;width:61px;height:20px;box-sizing:border-box;border:1px solid #bccde6;border-radius:2px;background:#fff;box-shadow:inset 1px 1px 0 #9c9c9c"></div>
<div style="left:522px;top:535px;width:53px;height:20px;box-sizing:border-box;border:1px solid #bccde6;border-radius:2px;background:#fff;box-shadow:inset 1px 1px 0 #9c9c9c"></div>
<div style="left:576px;top:535px;width:60px;height:20px;box-sizing:border-box;border:1px solid #bccde6;border-radius:2px;background:#fff;box-shadow:inset 1px 1px 0 #9c9c9c"></div>
<div style="left:637px;top:535px;width:66px;height:20px;box-sizing:border-box;border:1px solid #bccde6;border-radius:2px;background:#fff;box-shadow:inset 1px 1px 0 #9c9c9c"></div>
<div style="left:704px;top:535px;width:39px;height:20px;box-sizing:border-box;border:1px solid #bccde6;border-radius:2px;background:#fff;box-shadow:inset 1px 1px 0 #9c9c9c"></div>
<div style="left:744px;top:535px;width:92px;height:20px;box-sizing:border-box;border:1px solid #bccde6;border-radius:2px;background:#fff;box-shadow:inset 1px 1px 0 #9c9c9c"></div>
<div style="left:841px;top:536px;width:86px;height:19px;box-sizing:border-box;border:1px solid #a2a2a2;border-right-color:#bcd0ea;border-bottom-color:#bcd0ea;border-radius:3px;background:#c0c0c0"></div>
<div class="t" style="left:842px;top:542.03px;width:86px;font-size:10.6px;color:#fafafa;text-align:center;font-family:'Liberation Sans', sans-serif;">Gerar Etiqueta</div>
<div class="t" style="left:841px;top:541.03px;width:86px;font-size:10.6px;color:#949494;text-align:center;font-family:'Liberation Sans', sans-serif;">Gerar Etiqueta</div>
<div style="left:29px;top:556px;width:39px;height:20px;box-sizing:border-box;border:1px solid #bccde6;border-radius:2px;background:#fff;box-shadow:inset 1px 1px 0 #9c9c9c"></div>
<div style="left:69px;top:556px;width:39px;height:20px;box-sizing:border-box;border:1px solid #bccde6;border-radius:2px;background:#fff;box-shadow:inset 1px 1px 0 #9c9c9c"></div>
<div style="left:109px;top:556px;width:39px;height:20px;box-sizing:border-box;border:1px solid #bccde6;border-radius:2px;background:#fff;box-shadow:inset 1px 1px 0 #9c9c9c"></div>
<div style="left:149px;top:556px;width:52px;height:20px;box-sizing:border-box;border:1px solid #bccde6;border-radius:2px;background:#fff;box-shadow:inset 1px 1px 0 #9c9c9c"></div>
<div style="left:202px;top:556px;width:257px;height:20px;box-sizing:border-box;border:1px solid #bccde6;border-radius:2px;background:#fff;box-shadow:inset 1px 1px 0 #9c9c9c"></div>
<div style="left:460px;top:556px;width:61px;height:20px;box-sizing:border-box;border:1px solid #bccde6;border-radius:2px;background:#fff;box-shadow:inset 1px 1px 0 #9c9c9c"></div>
<div style="left:522px;top:556px;width:53px;height:20px;box-sizing:border-box;border:1px solid #bccde6;border-radius:2px;background:#fff;box-shadow:inset 1px 1px 0 #9c9c9c"></div>
<div style="left:576px;top:556px;width:60px;height:20px;box-sizing:border-box;border:1px solid #bccde6;border-radius:2px;background:#fff;box-shadow:inset 1px 1px 0 #9c9c9c"></div>
<div style="left:637px;top:556px;width:66px;height:20px;box-sizing:border-box;border:1px solid #bccde6;border-radius:2px;background:#fff;box-shadow:inset 1px 1px 0 #9c9c9c"></div>
<div style="left:704px;top:556px;width:39px;height:20px;box-sizing:border-box;border:1px solid #bccde6;border-radius:2px;background:#fff;box-shadow:inset 1px 1px 0 #9c9c9c"></div>
<div style="left:744px;top:556px;width:92px;height:20px;box-sizing:border-box;border:1px solid #bccde6;border-radius:2px;background:#fff;box-shadow:inset 1px 1px 0 #9c9c9c"></div>
<div style="left:841px;top:557px;width:86px;height:19px;box-sizing:border-box;border:1px solid #a2a2a2;border-right-color:#bcd0ea;border-bottom-color:#bcd0ea;border-radius:3px;background:#c0c0c0"></div>
<div class="t" style="left:842px;top:563.03px;width:86px;font-size:10.6px;color:#fafafa;text-align:center;font-family:'Liberation Sans', sans-serif;">Gerar Etiqueta</div>
<div class="t" style="left:841px;top:562.03px;width:86px;font-size:10.6px;color:#949494;text-align:center;font-family:'Liberation Sans', sans-serif;">Gerar Etiqueta</div>
<div class="t" style="left:29px;top:198.67px;width:40px;font-size:10.67px;font-weight:bold;color:#000080;text-align:center;font-family:'Liberation Sans', sans-serif;">1</div>
<div class="t" style="left:69px;top:198.67px;width:40px;font-size:10.67px;font-weight:bold;color:#000080;text-align:center;font-family:'Liberation Sans', sans-serif;">19</div>
<div class="t" style="left:109px;top:198.67px;width:40px;font-size:10.67px;font-weight:bold;color:#000080;text-align:center;font-family:'Liberation Sans', sans-serif;">7</div>
<div class="t" style="left:149px;top:198.67px;width:53px;font-size:10.67px;font-weight:bold;color:#000080;text-align:center;font-family:'Liberation Sans', sans-serif;">8549</div>
<div class="t" style="left:205.6px;top:198.67px;font-size:10.67px;font-weight:bold;color:#000080;text-align:left;font-family:'Liberation Sans', sans-serif;">ESPUMA PU D-30 8MM</div>
<div class="t" style="left:460px;top:198.67px;width:62px;font-size:10.67px;font-weight:bold;color:#000080;text-align:center;font-family:'Liberation Sans', sans-serif;">3006</div>
<div class="t" style="left:522px;top:198.67px;width:54px;font-size:10.67px;font-weight:bold;color:#000080;text-align:center;font-family:'Liberation Sans', sans-serif;">880466</div>
<div class="t" style="left:576px;top:198.67px;width:61px;font-size:10.67px;font-weight:bold;color:#000080;text-align:center;font-family:'Liberation Sans', sans-serif;">03/04/2025</div>
<div class="t" style="left:637px;top:198.67px;width:67px;font-size:10.67px;font-weight:bold;color:#000080;text-align:center;font-family:'Liberation Sans', sans-serif;">72907819</div>
<div class="t" style="left:704px;top:198.67px;width:40px;font-size:10.67px;font-weight:bold;color:#000080;text-align:center;font-family:'Liberation Sans', sans-serif;">M2</div>
<div style="left:756px;top:196px;width:78px;height:15px;background:#46618c"></div>
<div class="t" style="left:700px;top:198.67px;width:133px;font-size:10.67px;font-weight:bold;color:#fff;text-align:right;font-family:'Liberation Sans', sans-serif;">714.0000</div>
<div class="t" style="left:17px;top:589.83px;font-size:10.6px;color:#000;text-align:left;font-family:'Liberation Sans', sans-serif;">Ctrl Etiqueta</div>
<div style="left:77px;top:584px;width:186px;height:20px;box-sizing:border-box;border:1px solid #9a9a9a;border-radius:2px;background:#ffffc6;box-shadow:inset 1px 1px 0 #fff,-1px -1px 0 #c4d4ea"></div>
<div style="left:249px;top:586px;width:13px;height:17px;background:#e8ecf4"></div>
<svg style="position:absolute;left:251.5px;top:591.5px" width="8" height="5"><path d="M0 0H8L4 4.5Z" fill="#5c6072"/></svg>
<div class="t" style="left:82.3px;top:589.30px;font-size:11.1px;font-weight:bold;color:#000080;text-align:left;font-family:'Liberation Sans', sans-serif;">Controlada</div>
<div class="t" style="left:269.2px;top:587.63px;font-size:10.6px;color:#000;text-align:left;font-family:'Liberation Sans', sans-serif;">Situação</div>
<div style="left:315px;top:583px;width:101px;height:20px;box-sizing:border-box;border:1px solid #bccde6;border-radius:2px;background:#ffffc6;box-shadow:inset 1px 1px 0 #9c9c9c"></div>
<div class="t" style="left:427.4px;top:586.83px;font-size:10.6px;color:#000;text-align:left;font-family:'Liberation Sans', sans-serif;">Fornecedor</div>
<div style="left:487px;top:582px;width:302px;height:19px;box-sizing:border-box;border:1px solid #bccde6;border-radius:2px;background:#ffffc6;box-shadow:inset 1px 1px 0 #9c9c9c"></div>
<div style="left:493px;top:590px;width:206px;height:2px;background:#fbf7c6"></div>
<div style="left:360px;top:592px;width:12px;height:2px;background:#fbf7c6"></div>
<div style="left:794px;top:585px;width:71px;height:19px;box-sizing:border-box;border:1px solid #a2a2a2;border-right-color:#7292ba;border-bottom-color:#7292ba;border-radius:3px;background:#fff"></div>
<div class="t" style="left:794px;top:589.83px;width:71px;font-size:10.6px;font-weight:bold;color:#000;text-align:center;font-family:'Liberation Sans', sans-serif;">Excel</div>
<div style="left:869px;top:585px;width:58px;height:19px;box-sizing:border-box;border:1px solid #a2a2a2;border-right-color:#7292ba;border-bottom-color:#7292ba;border-radius:3px;background:#fff"></div>
<div class="t" style="left:869px;top:589.83px;width:58px;font-size:10.6px;font-weight:bold;color:#000;text-align:center;font-family:'Liberation Sans', sans-serif;">Scm1278</div>
</body></html>
